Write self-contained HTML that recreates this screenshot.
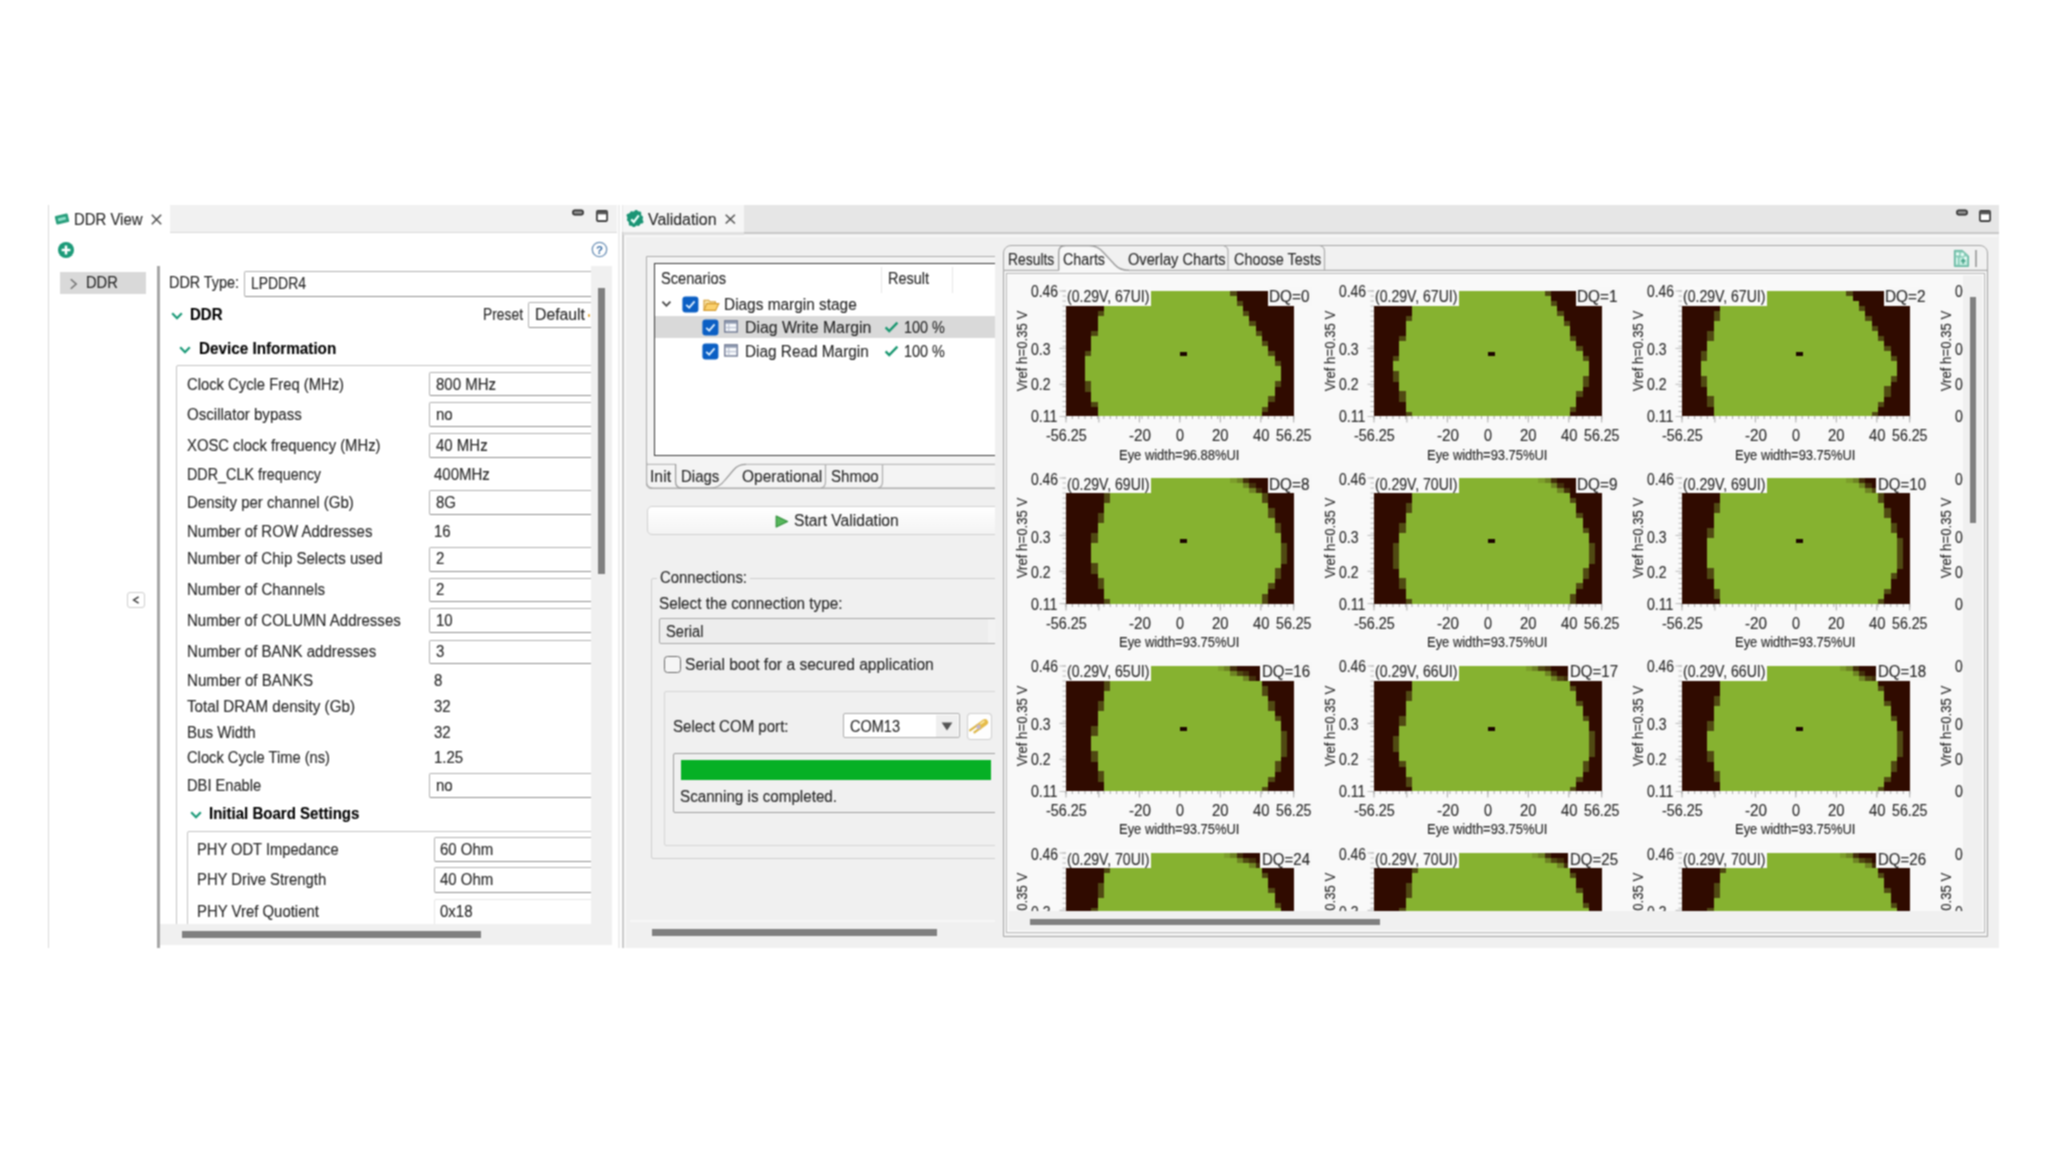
<!DOCTYPE html>
<html lang="en"><head><meta charset="utf-8"><title>DDR Validation</title><style>
html,body{margin:0;padding:0;background:#fff}
body{width:2048px;height:1153px;position:relative;overflow:hidden;font-family:"Liberation Sans",sans-serif;color:#262626}
div,span.t,svg{position:absolute;box-sizing:border-box}
#w{left:0;top:0;width:2048px;height:1153px;background:#fff;filter:url(#soft)}
span.t{white-space:pre;display:block;transform-origin:0 0;-webkit-text-stroke:0.12px currentColor}
.clip{overflow:hidden}
.in{background:#fff;border:1px solid #b0b0b0;border-bottom-color:#909090;border-radius:2px}
</style></head>
<body>
<svg width="0" height="0" style="position:absolute"><filter id="soft" x="0" y="0" width="100%" height="100%" color-interpolation-filters="sRGB"><feConvolveMatrix order="3" kernelMatrix="0.0625 0.125 0.0625 0.125 0.25 0.125 0.0625 0.125 0.0625" edgeMode="duplicate" preserveAlpha="true"/></filter></svg>
<div id="w">
<div style="left:48px;top:205px;width:570px;height:742.5px;background:#fff;border-left:1px solid #d9d9d9"></div>
<div style="left:49px;top:205px;width:568px;height:28px;background:#f1f1f1;border-bottom:1px solid #dadada"></div>
<div style="left:49px;top:205px;width:120.5px;height:29px;background:#fff"></div>
<svg style="left:53.5px;top:211px;" width="16" height="16" viewBox="0 0 16 16"><g transform="rotate(-13 8 8)"><rect x="1.4" y="3.6" width="13.2" height="8.8" rx="1.2" fill="#2a9f7d"/><rect x="4" y="6.4" width="8" height="3" rx="0.6" fill="#8fe0cb"/></g></svg>
<span class="t" style="left:74.00px;top:210.36px;font-size:16.00px;line-height:19px;transform:scaleX(0.9319);">DDR View</span>
<svg style="left:151px;top:214px;" width="11" height="11" viewBox="0 0 11 11"><path d="M0.8 0.8 L10.2 10.2 M10.2 0.8 L0.8 10.2" stroke="#4c4c4c" stroke-width="1.45" fill="none"/></svg>
<svg style="left:572px;top:208.5px;" width="12" height="8" viewBox="0 0 12 8"><rect x="0.9" y="1.2" width="10.2" height="4.6" rx="2" fill="#8a8a8a" stroke="#2b2b2b" stroke-width="1.5"/></svg>
<svg style="left:595.5px;top:209.5px;" width="12" height="12" viewBox="0 0 12 12"><rect x="0.9" y="0.9" width="10.2" height="10.2" rx="1" fill="#fff" stroke="#2b2b2b" stroke-width="1.6"/><rect x="0.9" y="0.9" width="10.2" height="3.4" fill="#555"/></svg>
<svg style="left:57px;top:240.5px;" width="18" height="18" viewBox="0 0 18 18"><circle cx="9" cy="9" r="8" fill="#1b9a78"/><path d="M9 4.6 V13.4 M4.6 9 H13.4" stroke="#fff" stroke-width="2.6"/></svg>
<svg style="left:591px;top:241px" width="17" height="17" viewBox="0 0 17 17"><circle cx="8.5" cy="8.5" r="7.2" fill="#fff" stroke="#6f93b8" stroke-width="1.3"/><text x="8.5" y="12.6" text-anchor="middle" font-family="Liberation Sans, sans-serif" font-weight="bold" font-size="11.5" fill="#3c6fa6">?</text></svg>
<div style="left:60px;top:271.5px;width:86px;height:22.5px;background:#d9d9d9"></div>
<svg style="left:69px;top:277.5px;" width="9" height="12" viewBox="0 0 9 12"><path d="M1.8 1.2 L7.2 6 L1.8 10.8" stroke="#707070" stroke-width="1.5" fill="none"/></svg>
<span class="t" style="left:85.75px;top:273.46px;font-size:16.00px;line-height:19px;transform:scaleX(0.9159);">DDR</span>
<div style="left:127px;top:591.5px;width:17.5px;height:16.5px;background:#fff;border:1px solid #cecece;border-radius:3px"></div>
<svg style="left:131px;top:595px;" width="10" height="10" viewBox="0 0 10 10"><path d="M7.6 1.8 L2.6 5 L7.6 8.2" stroke="#333" stroke-width="1.4" fill="none"/></svg>
<div style="left:156.5px;top:266px;width:3px;height:681.5px;background:#a6a6a6"></div>
<div style="left:590.5px;top:266px;width:21.5px;height:679px;background:#f0f0f0"></div>
<div style="left:159.5px;top:924px;width:452.5px;height:21px;background:#f0f0f0"></div>
<div style="left:598px;top:288px;width:6.5px;height:286px;background:#808080"></div>
<div style="left:181.5px;top:931px;width:299.5px;height:6.5px;background:#808080"></div>
<div class="clip" style="left:160px;top:266px;width:430.5px;height:658px">
<span class="t" style="left:8.75px;top:6.96px;font-size:16.00px;line-height:19px;transform:scaleX(0.8980);">DDR Type:</span>
<div class="in" style="left:83.75px;top:4.5px;width:400px;height:26.25px;"></div>
<span class="t" style="left:90.75px;top:7.96px;font-size:16.00px;line-height:19px;transform:scaleX(0.8711);">LPDDR4</span>
<svg style="left:11px;top:45.5px;" width="12" height="8" viewBox="0 0 12 8"><path d="M1.2 1.2 L6 6.2 L10.8 1.2" stroke="#1b9a78" stroke-width="2.2" fill="none"/></svg>
<span class="t" style="left:30.00px;top:38.96px;font-size:16.00px;line-height:19px;transform:scaleX(0.9375);font-weight:bold;color:#000;">DDR</span>
<span class="t" style="left:322.50px;top:38.96px;font-size:16.00px;line-height:19px;transform:scaleX(0.8650);">Preset</span>
<div class="in" style="left:367.5px;top:36.25px;width:120px;height:25.5px;"></div>
<span class="t" style="left:375.00px;top:39.21px;font-size:16.00px;line-height:19px;transform:scaleX(0.9863);">Default</span>
<div style="left:427.6px;top:47.5px;width:2.4px;height:3px;background:#e0a83a;border-radius:1px"></div>
<svg style="left:19px;top:79.5px;" width="12" height="8" viewBox="0 0 12 8"><path d="M1.2 1.2 L6 6.2 L10.8 1.2" stroke="#1b9a78" stroke-width="2.2" fill="none"/></svg>
<span class="t" style="left:38.75px;top:72.96px;font-size:16.00px;line-height:19px;transform:scaleX(0.9529);font-weight:bold;color:#000;">Device Information</span>
<div style="left:16px;top:98.5px;width:480px;height:700px;border:1px solid #c3c3c3;border-radius:2px"></div>
<span class="t" style="left:27.00px;top:108.71px;font-size:16.00px;line-height:19px;transform:scaleX(0.9247);">Clock Cycle Freq (MHz)</span>
<div class="in" style="left:268.75px;top:105.75px;width:300px;height:24.25px;"></div>
<span class="t" style="left:275.75px;top:108.71px;font-size:16.00px;line-height:19px;transform:scaleX(0.9370);">800 MHz</span>
<span class="t" style="left:27.00px;top:139.46px;font-size:16.00px;line-height:19px;transform:scaleX(0.9419);">Oscillator bypass</span>
<div class="in" style="left:268.75px;top:136.25px;width:300px;height:25px;"></div>
<span class="t" style="left:275.75px;top:139.46px;font-size:16.00px;line-height:19px;transform:scaleX(0.9370);">no</span>
<span class="t" style="left:27.00px;top:170.46px;font-size:16.00px;line-height:19px;transform:scaleX(0.9261);">XOSC clock frequency (MHz)</span>
<div class="in" style="left:268.75px;top:167px;width:300px;height:25px;"></div>
<span class="t" style="left:275.75px;top:170.46px;font-size:16.00px;line-height:19px;transform:scaleX(0.9370);">40 MHz</span>
<span class="t" style="left:27.00px;top:198.71px;font-size:16.00px;line-height:19px;transform:scaleX(0.8969);">DDR_CLK frequency</span>
<span class="t" style="left:274.00px;top:198.71px;font-size:16.00px;line-height:19px;transform:scaleX(0.9370);">400MHz</span>
<span class="t" style="left:27.00px;top:227.21px;font-size:16.00px;line-height:19px;transform:scaleX(0.9375);">Density per channel (Gb)</span>
<div class="in" style="left:268.75px;top:223.5px;width:300px;height:25px;"></div>
<span class="t" style="left:275.75px;top:227.21px;font-size:16.00px;line-height:19px;transform:scaleX(0.9370);">8G</span>
<span class="t" style="left:27.00px;top:255.96px;font-size:16.00px;line-height:19px;transform:scaleX(0.9397);">Number of ROW Addresses</span>
<span class="t" style="left:274.00px;top:255.96px;font-size:16.00px;line-height:19px;transform:scaleX(0.9370);">16</span>
<span class="t" style="left:27.00px;top:283.46px;font-size:16.00px;line-height:19px;transform:scaleX(0.9394);">Number of Chip Selects used</span>
<div class="in" style="left:268.75px;top:280.5px;width:300px;height:25px;"></div>
<span class="t" style="left:275.75px;top:283.46px;font-size:16.00px;line-height:19px;transform:scaleX(0.9370);">2</span>
<span class="t" style="left:27.00px;top:314.21px;font-size:16.00px;line-height:19px;transform:scaleX(0.9404);">Number of Channels</span>
<div class="in" style="left:268.75px;top:311.75px;width:300px;height:24.5px;"></div>
<span class="t" style="left:275.75px;top:314.21px;font-size:16.00px;line-height:19px;transform:scaleX(0.9370);">2</span>
<span class="t" style="left:27.00px;top:345.46px;font-size:16.00px;line-height:19px;transform:scaleX(0.9390);">Number of COLUMN Addresses</span>
<div class="in" style="left:268.75px;top:342.25px;width:300px;height:25px;"></div>
<span class="t" style="left:275.75px;top:345.46px;font-size:16.00px;line-height:19px;transform:scaleX(0.9370);">10</span>
<span class="t" style="left:27.00px;top:375.96px;font-size:16.00px;line-height:19px;transform:scaleX(0.9416);">Number of BANK addresses</span>
<div class="in" style="left:268.75px;top:373.5px;width:300px;height:24.5px;"></div>
<span class="t" style="left:275.75px;top:375.96px;font-size:16.00px;line-height:19px;transform:scaleX(0.9370);">3</span>
<span class="t" style="left:27.00px;top:404.71px;font-size:16.00px;line-height:19px;transform:scaleX(0.9446);">Number of BANKS</span>
<span class="t" style="left:274.00px;top:404.71px;font-size:16.00px;line-height:19px;transform:scaleX(0.9370);">8</span>
<span class="t" style="left:27.00px;top:430.96px;font-size:16.00px;line-height:19px;transform:scaleX(0.9495);">Total DRAM density (Gb)</span>
<span class="t" style="left:274.00px;top:430.96px;font-size:16.00px;line-height:19px;transform:scaleX(0.9370);">32</span>
<span class="t" style="left:27.00px;top:456.71px;font-size:16.00px;line-height:19px;transform:scaleX(0.9429);">Bus Width</span>
<span class="t" style="left:274.00px;top:456.71px;font-size:16.00px;line-height:19px;transform:scaleX(0.9370);">32</span>
<span class="t" style="left:27.00px;top:482.21px;font-size:16.00px;line-height:19px;transform:scaleX(0.9191);">Clock Cycle Time (ns)</span>
<span class="t" style="left:274.00px;top:482.21px;font-size:16.00px;line-height:19px;transform:scaleX(0.9370);">1.25</span>
<span class="t" style="left:27.00px;top:509.76px;font-size:16.00px;line-height:19px;transform:scaleX(0.9167);">DBI Enable</span>
<div class="in" style="left:268.75px;top:506.8px;width:300px;height:25.1px;"></div>
<span class="t" style="left:275.75px;top:509.76px;font-size:16.00px;line-height:19px;transform:scaleX(0.9370);">no</span>
<svg style="left:29.5px;top:545px;" width="12" height="8" viewBox="0 0 12 8"><path d="M1.2 1.2 L6 6.2 L10.8 1.2" stroke="#1b9a78" stroke-width="2.2" fill="none"/></svg>
<span class="t" style="left:49.00px;top:538.46px;font-size:16.00px;line-height:19px;transform:scaleX(0.9399);font-weight:bold;color:#000;">Initial Board Settings</span>
<div style="left:26.5px;top:564.5px;width:480px;height:300px;border:1px solid #c3c3c3;border-radius:2px"></div>
<span class="t" style="left:37.30px;top:573.66px;font-size:16.00px;line-height:19px;transform:scaleX(0.9186);">PHY ODT Impedance</span>
<div class="in" style="left:273.5px;top:571px;width:300px;height:24.5px;"></div>
<span class="t" style="left:280.00px;top:573.66px;font-size:16.00px;line-height:19px;transform:scaleX(0.9370);">60 Ohm</span>
<span class="t" style="left:37.30px;top:604.46px;font-size:16.00px;line-height:19px;transform:scaleX(0.9273);">PHY Drive Strength</span>
<div class="in" style="left:273.5px;top:601.3px;width:300px;height:25.5px;"></div>
<span class="t" style="left:280.00px;top:604.46px;font-size:16.00px;line-height:19px;transform:scaleX(0.9370);">40 Ohm</span>
<span class="t" style="left:37.30px;top:635.96px;font-size:16.00px;line-height:19px;transform:scaleX(0.9324);">PHY Vref Quotient</span>
<div style="left:273.5px;top:632.7px;width:300px;height:31.3px;background:#fff;border:1px solid #e6e6e6;border-radius:2px"></div>
<span class="t" style="left:280.00px;top:635.96px;font-size:16.00px;line-height:19px;transform:scaleX(0.9370);">0x18</span>
</div>
<div style="left:618.2px;top:205px;width:1.6px;height:742.5px;background:#eeeeee"></div>
<div style="left:621.5px;top:205px;width:1377px;height:742.5px;background:#f0f0f0"></div>
<div style="left:621.5px;top:205px;width:1377px;height:28.5px;background:#e6e6e6"></div>
<div style="left:621.5px;top:232.2px;width:1377px;height:2.3px;background:#c9c9c9"></div>
<div style="left:625px;top:234.5px;width:1373px;height:2.2px;background:#f6f6f6"></div>
<div style="left:622px;top:234px;width:2.4px;height:713.5px;background:#c9c9c9"></div>
<div style="left:624.4px;top:236px;width:1.6px;height:711.5px;background:#f8f8f8"></div>
<div style="left:622.5px;top:205px;width:121px;height:27.4px;background:#f6f6f6"></div>
<div style="left:622.5px;top:232.2px;width:121px;height:2.4px;background:#e0e0e0"></div>
<svg style="left:626px;top:209.8px;" width="18" height="17.5" viewBox="0 0 18 17.5"><path d="M16.1 6.0 L16.9 6.6 L17.1 7.5 L16.9 8.3 L16.6 9.1 L16.7 10.0 L17.2 11.0 L17.5 12.0 L17.1 12.9 L16.1 13.4 L15.0 13.6 L14.3 14.1 L13.9 14.8 L13.4 15.6 L12.6 15.9 L11.6 15.7 L10.7 15.6 L10.0 15.8 L9.3 16.5 L8.4 17.2 L7.5 17.3 L6.6 16.8 L6.0 16.1 L5.2 15.8 L4.2 15.7 L3.3 15.4 L2.8 14.6 L2.8 13.5 L2.8 12.5 L2.5 11.7 L1.9 11.2 L1.1 10.6 L0.9 9.7 L1.1 8.9 L1.4 8.1 L1.3 7.2 L0.8 6.2 L0.5 5.2 L0.9 4.3 L1.9 3.8 L3.0 3.6 L3.7 3.1 L4.1 2.4 L4.6 1.6 L5.4 1.3 L6.4 1.5 L7.3 1.6 L8.0 1.4 L8.7 0.7 L9.6 -0.0 L10.5 -0.1 L11.4 0.4 L12.0 1.1 L12.8 1.4 L13.8 1.5 L14.7 1.8 L15.2 2.6 L15.2 3.7 L15.2 4.7 L15.5 5.5 Z" fill="#1b9575"/><path d="M5.2 9.4 L7.8 12 L12.8 5.4" stroke="#ecfffa" stroke-width="2.2" fill="none"/></svg>
<span class="t" style="left:647.50px;top:209.96px;font-size:16.00px;line-height:19px;transform:scaleX(0.9915);">Validation</span>
<svg style="left:725.3px;top:214px;" width="11" height="11" viewBox="0 0 11 11"><path d="M0.7 0.7 L9.9 9.5 M9.9 0.7 L0.7 9.5" stroke="#4c4c4c" stroke-width="1.45" fill="none"/></svg>
<svg style="left:1955.5px;top:208.5px;" width="12" height="8" viewBox="0 0 12 8"><rect x="0.9" y="1.2" width="10.2" height="4.6" rx="2" fill="#8a8a8a" stroke="#2b2b2b" stroke-width="1.5"/></svg>
<svg style="left:1979px;top:209.5px;" width="12" height="12" viewBox="0 0 12 12"><rect x="0.9" y="0.9" width="10.2" height="10.2" rx="1" fill="#fff" stroke="#2b2b2b" stroke-width="1.6"/><rect x="0.9" y="0.9" width="10.2" height="3.4" fill="#555"/></svg>
<div class="clip" style="left:626px;top:237px;width:369px;height:710px">
<div style="left:20px;top:18.6px;width:500px;height:233px;background:#f4f4f4;border:1px solid #acacac;border-radius:0 0 0 5px"></div>
<div style="left:27.5px;top:26.2px;width:500px;height:193.2px;background:#fff;border:1.6px solid #3a3a3a"></div>
<span class="t" style="left:35.00px;top:31.96px;font-size:16.00px;line-height:19px;transform:scaleX(0.9135);">Scenarios</span>
<span class="t" style="left:262.00px;top:31.96px;font-size:16.00px;line-height:19px;transform:scaleX(0.9040);">Result</span>
<div style="left:254.5px;top:30px;width:1.2px;height:26px;background:#e6e6e6"></div>
<div style="left:326px;top:30px;width:1.2px;height:26px;background:#e6e6e6"></div>
<svg style="left:35px;top:63px;" width="11" height="8" viewBox="0 0 11 8"><path d="M1.4 1.6 L5.4 5.8 L9.4 1.6" stroke="#444" stroke-width="1.8" fill="none"/></svg>
<svg style="left:55.5px;top:58.5px;" width="17" height="17" viewBox="0 0 17 17"><rect x="0.4" y="0.4" width="16" height="16" rx="3.2" fill="#0b5fc4"/><path d="M4.2 8.8 L7.2 11.6 L12.6 5.4" stroke="#d9ecff" stroke-width="1.8" fill="none"/></svg>
<svg style="left:77px;top:60.5px;" width="17" height="14" viewBox="0 0 17 14"><path d="M1 12.4 V2.2 H5.6 L7 3.8 H12.4 V5.6" fill="#f8e3a6" stroke="#d39a2e" stroke-width="1.1"/><path d="M1 12.4 L3.8 5.6 H15.8 L12.6 12.4 Z" fill="#fbd16d" stroke="#d39a2e" stroke-width="1.1"/></svg>
<span class="t" style="left:98.25px;top:57.71px;font-size:16.00px;line-height:19px;transform:scaleX(0.9630);">Diags margin stage</span>
<div style="left:29px;top:79px;width:400px;height:22.3px;background:#d9d9d9"></div>
<svg style="left:76px;top:82.25px;" width="17" height="17" viewBox="0 0 17 17"><rect x="0.4" y="0.4" width="16" height="16" rx="3.2" fill="#0b5fc4"/><path d="M4.2 8.8 L7.2 11.6 L12.6 5.4" stroke="#d9ecff" stroke-width="1.8" fill="none"/></svg>
<svg style="left:98.25px;top:83px;" width="14" height="13" viewBox="0 0 14 13"><rect x="0.8" y="0.8" width="12.4" height="11.2" fill="#f6f8fc" stroke="#66708a" stroke-width="1.3"/><rect x="1.2" y="1.2" width="11.6" height="2.4" fill="#8793ab"/><path d="M4.8 3.6 V11.6 M1.4 7.6 H12.6" stroke="#b4bccd" stroke-width="1"/></svg>
<span class="t" style="left:119.00px;top:80.96px;font-size:16.00px;line-height:19px;transform:scaleX(0.9883);">Diag Write Margin</span>
<svg style="left:258px;top:84px;" width="15" height="12" viewBox="0 0 15 12"><path d="M1.6 6.4 L5.2 10 L13.4 1.6" stroke="#17966f" stroke-width="2.3" fill="none"/></svg>
<span class="t" style="left:277.75px;top:80.96px;font-size:16.00px;line-height:19px;transform:scaleX(0.8982);">100 %</span>
<svg style="left:76px;top:106px;" width="17" height="17" viewBox="0 0 17 17"><rect x="0.4" y="0.4" width="16" height="16" rx="3.2" fill="#0b5fc4"/><path d="M4.2 8.8 L7.2 11.6 L12.6 5.4" stroke="#d9ecff" stroke-width="1.8" fill="none"/></svg>
<svg style="left:98.25px;top:106.8px;" width="14" height="13" viewBox="0 0 14 13"><rect x="0.8" y="0.8" width="12.4" height="11.2" fill="#f6f8fc" stroke="#66708a" stroke-width="1.3"/><rect x="1.2" y="1.2" width="11.6" height="2.4" fill="#8793ab"/><path d="M4.8 3.6 V11.6 M1.4 7.6 H12.6" stroke="#b4bccd" stroke-width="1"/></svg>
<span class="t" style="left:119.00px;top:104.71px;font-size:16.00px;line-height:19px;transform:scaleX(0.9596);">Diag Read Margin</span>
<svg style="left:258px;top:107.8px;" width="15" height="12" viewBox="0 0 15 12"><path d="M1.6 6.4 L5.2 10 L13.4 1.6" stroke="#17966f" stroke-width="2.3" fill="none"/></svg>
<span class="t" style="left:277.75px;top:104.71px;font-size:16.00px;line-height:19px;transform:scaleX(0.8982);">100 %</span>
<svg style="left:20px;top:225px;" width="360" height="28" viewBox="0 0 360 28"><path d="M0 2.4 H29.6 M100 2.4 H360" stroke="#bababa" stroke-width="1.2" fill="none"/>
<path d="M29.6 2 V20 Q29.6 26 36 26 H65 Q73 26 79 18 L87.5 8 Q92 2.4 100 2.4" stroke="#979797" stroke-width="1.2" fill="#f4f4f4"/>
<path d="M0.6 0 V20 Q0.6 26 7 26 H360" stroke="#acacac" stroke-width="1.2" fill="none"/>
<path d="M179.5 3 V20 Q179.5 25 175 26" stroke="#acacac" stroke-width="1.2" fill="none"/>
<path d="M236.5 3 V20 Q236.5 25 232 26" stroke="#acacac" stroke-width="1.2" fill="none"/></svg>
<span class="t" style="left:24.00px;top:230.46px;font-size:16.00px;line-height:19px;transform:scaleX(0.9839);">Init</span>
<span class="t" style="left:54.50px;top:230.46px;font-size:16.00px;line-height:19px;transform:scaleX(0.9350);">Diags</span>
<span class="t" style="left:115.75px;top:230.46px;font-size:16.00px;line-height:19px;transform:scaleX(0.9701);">Operational</span>
<span class="t" style="left:205.00px;top:230.46px;font-size:16.00px;line-height:19px;transform:scaleX(0.9419);">Shmoo</span>
<div style="left:21px;top:269px;width:420px;height:28.5px;background:linear-gradient(#fff,#f3f3f3);border:1px solid #d1d1d1;border-radius:5px"></div>
<svg style="left:149px;top:277.5px;" width="14" height="13" viewBox="0 0 14 13"><path d="M1.2 1 L12.6 6.5 L1.2 12 Z" fill="#58b85c" stroke="#2f8f3a" stroke-width="1.2" stroke-linejoin="round"/></svg>
<span class="t" style="left:168.00px;top:273.96px;font-size:16.00px;line-height:19px;transform:scaleX(0.9760);">Start Validation</span>
<div style="left:25px;top:340.5px;width:420px;height:281.2px;border:1px solid #cecece;border-radius:2px"></div>
<div style="left:31px;top:333px;width:93px;height:16px;background:#f0f0f0"></div>
<span class="t" style="left:34.00px;top:330.96px;font-size:16.00px;line-height:19px;transform:scaleX(0.9316);">Connections:</span>
<span class="t" style="left:33.00px;top:356.71px;font-size:16.00px;line-height:19px;transform:scaleX(0.9551);">Select the connection type:</span>
<div style="left:33px;top:381px;width:420px;height:25.75px;background:#ededed;border:1px solid #a8a8a8;border-radius:2px"></div>
<span class="t" style="left:39.50px;top:384.56px;font-size:16.00px;line-height:19px;transform:scaleX(0.9167);">Serial</span>
<div style="left:362px;top:382px;width:20px;height:23.75px;background:#f2f2f2"></div>
<div style="left:37.75px;top:419px;width:16.75px;height:17px;background:#f5f5f5;border:1.3px solid #6a6a6a;border-radius:3.5px"></div>
<span class="t" style="left:59.00px;top:417.96px;font-size:16.00px;line-height:19px;transform:scaleX(0.9744);">Serial boot for a secured application</span>
<div style="left:38.25px;top:453.5px;width:420px;height:155px;border:1px solid #d5d5d5;border-radius:2px"></div>
<span class="t" style="left:46.50px;top:480.46px;font-size:16.00px;line-height:19px;transform:scaleX(0.9413);">Select COM port:</span>
<div style="left:217px;top:476px;width:116.5px;height:25px;background:#fff;border:1px solid #acacac;border-radius:2px"></div>
<div style="left:310px;top:477.5px;width:21.5px;height:22px;background:#efefef"></div>
<span class="t" style="left:223.50px;top:479.71px;font-size:16.00px;line-height:19px;transform:scaleX(0.9070);">COM13</span>
<svg style="left:314.5px;top:485px;" width="12" height="9" viewBox="0 0 12 9"><path d="M0.6 0.6 H11.4 L6 8.6 Z" fill="#555"/></svg>
<div style="left:340.75px;top:475.7px;width:25.2px;height:27px;background:#fefefe;border:1px solid #cecece;border-bottom-color:#cfcfcf;border-radius:4px"></div>
<svg style="left:342.9px;top:479.9px;" width="20" height="19" viewBox="0 0 20 19"><g transform="rotate(-35.5 10 9.5)"><path d="M9 6.3 H17 Q20.4 6.3 20.4 9.5 Q20.4 12.7 17 12.7 H9 Z" fill="#e6bb48"/><path d="M-0.5 6.3 H10 V8.5 H-0.5 Z M2 10.5 H10 V12.7 H2 Z" fill="#dcb544"/><path d="M12.5 8.2 H17.6" stroke="#fbeeb0" stroke-width="1.5" fill="none"/><circle cx="9.4" cy="9.5" r="2.2" fill="#c2b6d0"/></g></svg>
<div style="left:46.5px;top:515.5px;width:420px;height:60.75px;border:1px solid #9e9e9e;border-radius:2px"></div>
<div style="left:54.5px;top:523px;width:310.75px;height:20px;background:#06b025"></div>
<span class="t" style="left:54.00px;top:550.46px;font-size:16.00px;line-height:19px;transform:scaleX(0.9490);">Scanning is completed.</span>
<div style="left:4px;top:683.4px;width:400px;height:1.6px;background:#f7f7f7"></div>
<div style="left:26px;top:692.25px;width:284.75px;height:6.25px;background:#808080"></div>
</div>
<div style="left:1002.6px;top:244.8px;width:985.7px;height:692px;background:#f1f1f1;border:1.6px solid #a5a5a5;border-radius:8px 8px 0 0"></div>
<svg style="left:1003px;top:245.3px;" width="984" height="28" viewBox="0 0 984 28"><path d="M0 25.3 H55.7 M125 25.3 H984" stroke="#b0b0b0" stroke-width="1.3" fill="none"/>
<path d="M55.7 26 V7.5 Q55.7 0.6 62.5 0.6 H86 Q95 0.6 101 8 L112 20 Q117 25.3 126 25.3 V28 H55.7 Z" fill="#f7f7f7"/>
<path d="M55.7 25.6 V7.5 Q55.7 0.6 62.5 0.6 H86 Q95 0.6 101 8 L112 20 Q117 25.3 126 25.3" stroke="#979797" stroke-width="1.3" fill="none"/>
<path d="M225 25 V6 Q225 2 221 1" stroke="#acacac" stroke-width="1.2" fill="none"/>
<path d="M321.5 25 V6 Q321.5 2 317.5 1" stroke="#acacac" stroke-width="1.2" fill="none"/></svg>
<span class="t" style="left:1007.50px;top:249.71px;font-size:16.00px;line-height:19px;transform:scaleX(0.8669);">Results</span>
<span class="t" style="left:1062.50px;top:249.71px;font-size:16.00px;line-height:19px;transform:scaleX(0.8912);">Charts</span>
<span class="t" style="left:1127.50px;top:249.71px;font-size:16.00px;line-height:19px;transform:scaleX(0.9138);">Overlay Charts</span>
<span class="t" style="left:1233.75px;top:249.71px;font-size:16.00px;line-height:19px;transform:scaleX(0.9027);">Choose Tests</span>
<svg style="left:1952.8px;top:248.6px;" width="17.5" height="19" viewBox="0 0 17.5 19"><path d="M1.4 1.4 H9.4 L15.6 7 V17.4 H1.4 Z" fill="#86cbb7" stroke="#63b59e" stroke-width="1"/><rect x="3" y="3.4" width="3.2" height="3.2" rx="1" fill="#e9fdf7"/><rect x="7.6" y="3.8" width="3.4" height="3.4" rx="1" fill="#e0faf3"/><rect x="3" y="8.2" width="1.8" height="7.6" rx="0.8" fill="#d6f4ec"/><rect x="6.4" y="8.6" width="7.6" height="7.4" rx="1" fill="#c3ecdf"/><rect x="11" y="7.4" width="3" height="3" rx="1" fill="#e6fbf5"/><path d="M10.2 15 V10.6 M8.2 12.6 L10.2 10.4 L12.2 12.6" stroke="#4fa88f" stroke-width="1.5" fill="none"/></svg>
<div style="left:1975.3px;top:249.5px;width:1.8px;height:17px;background:#a8a8a8"></div>
<div style="left:1005.9px;top:272.6px;width:979.6px;height:660.6px;background:#f0f0f0;border:1.3px solid #bababa;box-shadow:inset 0 0 0 1.3px #fdfdfd"></div>
<div style="left:1969.75px;top:297px;width:5.75px;height:226px;background:#808080"></div>
<div style="left:1030px;top:919.25px;width:350px;height:5.75px;background:#808080"></div>
<div class="clip" style="left:1008.5px;top:275.2px;width:954.2px;height:636px;background:#f9f9f9">
<svg style="left:57.75px;top:15.55px;" width="227.7" height="125.6" viewBox="0 0 227.7 125.6"><g shape-rendering="crispEdges"><rect width="227.7" height="125.6" fill="#300b00"/><rect x="44.27" y="0.00" width="120.17" height="5.32" fill="#86b230"/><rect x="37.95" y="0.00" width="6.52" height="5.32" fill="#504a12"/><rect x="164.25" y="0.00" width="6.52" height="5.32" fill="#504a12"/><rect x="37.95" y="5.02" width="132.82" height="5.32" fill="#86b230"/><rect x="37.95" y="10.05" width="132.82" height="5.32" fill="#86b230"/><rect x="170.57" y="10.05" width="6.52" height="5.32" fill="#504a12"/><rect x="37.95" y="15.07" width="139.15" height="5.32" fill="#86b230"/><rect x="37.95" y="20.10" width="139.15" height="5.32" fill="#86b230"/><rect x="31.62" y="20.10" width="6.52" height="5.32" fill="#504a12"/><rect x="176.90" y="20.10" width="6.52" height="5.32" fill="#504a12"/><rect x="31.62" y="25.12" width="151.80" height="5.32" fill="#86b230"/><rect x="31.62" y="30.14" width="151.80" height="5.32" fill="#86b230"/><rect x="183.22" y="30.14" width="6.52" height="5.32" fill="#504a12"/><rect x="31.62" y="35.17" width="158.12" height="5.32" fill="#86b230"/><rect x="31.62" y="40.19" width="158.12" height="5.32" fill="#86b230"/><rect x="25.30" y="40.19" width="6.52" height="5.32" fill="#504a12"/><rect x="189.55" y="40.19" width="6.52" height="5.32" fill="#504a12"/><rect x="25.30" y="45.22" width="170.77" height="5.32" fill="#86b230"/><rect x="25.30" y="50.24" width="170.77" height="5.32" fill="#86b230"/><rect x="195.88" y="50.24" width="6.52" height="5.32" fill="#504a12"/><rect x="25.30" y="55.26" width="177.10" height="5.32" fill="#86b230"/><rect x="25.30" y="60.29" width="177.10" height="5.32" fill="#86b230"/><rect x="18.97" y="60.29" width="6.52" height="5.32" fill="#504a12"/><rect x="202.20" y="60.29" width="6.52" height="5.32" fill="#504a12"/><rect x="18.97" y="65.31" width="189.75" height="5.32" fill="#86b230"/><rect x="18.97" y="70.34" width="189.75" height="5.32" fill="#86b230"/><rect x="208.52" y="70.34" width="6.52" height="5.32" fill="#504a12"/><rect x="18.97" y="75.36" width="196.07" height="15.37" fill="#86b230"/><rect x="25.30" y="90.43" width="183.42" height="5.32" fill="#86b230"/><rect x="18.97" y="90.43" width="6.52" height="5.32" fill="#504a12"/><rect x="208.52" y="90.43" width="6.52" height="5.32" fill="#504a12"/><rect x="25.30" y="95.46" width="183.42" height="5.32" fill="#86b230"/><rect x="18.97" y="95.46" width="6.52" height="5.32" fill="#504a12"/><rect x="25.30" y="100.48" width="183.42" height="5.32" fill="#86b230"/><rect x="25.30" y="105.50" width="177.10" height="5.32" fill="#86b230"/><rect x="202.20" y="105.50" width="6.52" height="5.32" fill="#504a12"/><rect x="31.62" y="110.53" width="170.77" height="5.32" fill="#86b230"/><rect x="25.30" y="110.53" width="6.52" height="5.32" fill="#504a12"/><rect x="31.62" y="115.55" width="164.45" height="5.32" fill="#86b230"/><rect x="195.88" y="115.55" width="6.52" height="5.32" fill="#504a12"/><rect x="31.62" y="120.58" width="164.45" height="5.32" fill="#86b230"/><rect x="113.55" y="60.89" width="7.52" height="4.02" fill="#1c0500"/></g></svg>
<svg style="left:49.75px;top:14.55px;" width="8" height="127.6" viewBox="0 0 8 127.6"><path d="M-3.5 0.00 H0 M-3.5 5.02 H0 M-3.5 10.05 H0 M-3.5 15.07 H0 M-3.5 20.10 H0 M-3.5 25.12 H0 M-3.5 30.14 H0 M-3.5 35.17 H0 M-3.5 40.19 H0 M-3.5 45.22 H0 M-3.5 50.24 H0 M-3.5 55.26 H0 M-3.5 60.29 H0 M-3.5 65.31 H0 M-3.5 70.34 H0 M-3.5 75.36 H0 M-3.5 80.38 H0 M-3.5 85.41 H0 M-3.5 90.43 H0 M-3.5 95.46 H0 M-3.5 100.48 H0 M-3.5 105.50 H0 M-3.5 110.53 H0 M-3.5 115.55 H0 M-3.5 120.58 H0 M-3.5 125.60 H0 M-6.5 0.00 H0 M-6.5 57.42 H0 M-6.5 93.30 H0 M-6.5 125.60 H0" transform="translate(8 1)" stroke="#bababa" stroke-width="1" fill="none"/></svg>
<span class="t" style="left:22.00px;top:6.10px;font-size:16.32px;line-height:20px;transform:scaleX(0.8500);">0.46</span>
<span class="t" style="left:22.00px;top:64.10px;font-size:16.32px;line-height:20px;transform:scaleX(0.8595);">0.3</span>
<span class="t" style="left:22.00px;top:99.10px;font-size:16.32px;line-height:20px;transform:scaleX(0.8595);">0.2</span>
<span class="t" style="left:22.00px;top:131.10px;font-size:16.32px;line-height:20px;transform:scaleX(0.8674);">0.11</span>
<span class="t" style="left:-31.19px;top:67.75px;width:89.88px;font-size:14.72px;line-height:16px;transform:rotate(-90deg) scaleX(0.8956);transform-origin:50% 50%">Vref h=0.35 V</span>
<svg style="left:56.75px;top:141.15px;" width="229.7" height="8" viewBox="0 0 229.7 8"><path d="M0.00 0 V3 M6.32 0 V3 M12.65 0 V3 M18.97 0 V3 M25.30 0 V3 M31.62 0 V3 M37.95 0 V3 M44.27 0 V3 M50.60 0 V3 M56.92 0 V3 M63.25 0 V3 M69.57 0 V3 M75.90 0 V3 M82.22 0 V3 M88.55 0 V3 M94.87 0 V3 M101.20 0 V3 M107.52 0 V3 M113.85 0 V3 M120.17 0 V3 M126.50 0 V3 M132.82 0 V3 M139.15 0 V3 M145.47 0 V3 M151.80 0 V3 M158.12 0 V3 M164.45 0 V3 M170.77 0 V3 M177.10 0 V3 M183.42 0 V3 M189.75 0 V3 M196.07 0 V3 M202.40 0 V3 M208.72 0 V3 M215.05 0 V3 M221.37 0 V3 M227.70 0 V3 M0.00 0 V6.5 M32.89 0 V6.5 M73.37 0 V6.5 M113.85 0 V6.5 M154.33 0 V6.5 M194.81 0 V6.5 M227.70 0 V6.5" transform="translate(1 0)" stroke="#a8a8a8" stroke-width="1" fill="none"/></svg>
<span class="t" style="left:37.38px;top:149.90px;font-size:16.32px;line-height:20px;transform:scaleX(0.8806);">-56.25</span>
<span class="t" style="left:120.12px;top:149.90px;font-size:16.32px;line-height:20px;transform:scaleX(0.9326);">-20</span>
<span class="t" style="left:167.60px;top:149.90px;font-size:16.32px;line-height:20px;transform:scaleX(0.8814);">0</span>
<span class="t" style="left:203.83px;top:149.90px;font-size:16.32px;line-height:20px;transform:scaleX(0.9089);">20</span>
<span class="t" style="left:244.31px;top:149.90px;font-size:16.32px;line-height:20px;transform:scaleX(0.9089);">40</span>
<span class="t" style="left:267.70px;top:149.90px;font-size:16.32px;line-height:20px;transform:scaleX(0.8692);">56.25</span>
<span class="t" style="left:110.50px;top:171.35px;font-size:13.87px;line-height:17px;transform:scaleX(0.9333);">Eye width=96.88%UI</span>
<div style="left:57.25px;top:11.55px;width:85.5px;height:19px;background:#fafafa"></div>
<span class="t" style="left:58.75px;top:11.20px;font-size:16.32px;line-height:20px;transform:scaleX(0.8633);">(0.29V, 67UI)</span>
<div style="left:259.25px;top:11.55px;width:44px;height:19px;background:#f8f8f8"></div>
<span class="t" style="left:260.75px;top:11.20px;font-size:16.32px;line-height:20px;transform:scaleX(0.9400);">DQ=0</span>
<svg style="left:365.75px;top:15.55px;" width="227.7" height="125.6" viewBox="0 0 227.7 125.6"><g shape-rendering="crispEdges"><rect width="227.7" height="125.6" fill="#300b00"/><rect x="44.27" y="0.00" width="126.50" height="5.32" fill="#86b230"/><rect x="170.57" y="0.00" width="6.52" height="5.32" fill="#504a12"/><rect x="44.27" y="5.02" width="132.82" height="5.32" fill="#86b230"/><rect x="37.95" y="5.02" width="6.52" height="5.32" fill="#504a12"/><rect x="37.95" y="10.05" width="139.15" height="5.32" fill="#86b230"/><rect x="176.90" y="10.05" width="6.52" height="5.32" fill="#504a12"/><rect x="37.95" y="15.07" width="145.47" height="5.32" fill="#86b230"/><rect x="37.95" y="20.10" width="145.47" height="5.32" fill="#86b230"/><rect x="183.22" y="20.10" width="6.52" height="5.32" fill="#504a12"/><rect x="37.95" y="25.12" width="151.80" height="5.32" fill="#86b230"/><rect x="31.62" y="25.12" width="6.52" height="5.32" fill="#504a12"/><rect x="31.62" y="30.14" width="158.12" height="5.32" fill="#86b230"/><rect x="189.55" y="30.14" width="6.52" height="5.32" fill="#504a12"/><rect x="31.62" y="35.17" width="164.45" height="10.35" fill="#86b230"/><rect x="31.62" y="45.22" width="164.45" height="5.32" fill="#86b230"/><rect x="25.30" y="45.22" width="6.52" height="5.32" fill="#504a12"/><rect x="195.88" y="45.22" width="6.52" height="5.32" fill="#504a12"/><rect x="25.30" y="50.24" width="177.10" height="5.32" fill="#86b230"/><rect x="25.30" y="55.26" width="177.10" height="5.32" fill="#86b230"/><rect x="202.20" y="55.26" width="6.52" height="5.32" fill="#504a12"/><rect x="25.30" y="60.29" width="183.42" height="5.32" fill="#86b230"/><rect x="25.30" y="65.31" width="183.42" height="5.32" fill="#86b230"/><rect x="18.97" y="65.31" width="6.52" height="5.32" fill="#504a12"/><rect x="208.52" y="65.31" width="6.52" height="5.32" fill="#504a12"/><rect x="18.97" y="70.34" width="196.07" height="10.35" fill="#86b230"/><rect x="25.30" y="80.38" width="189.75" height="5.32" fill="#86b230"/><rect x="18.97" y="80.38" width="6.52" height="5.32" fill="#504a12"/><rect x="25.30" y="85.41" width="183.42" height="5.32" fill="#86b230"/><rect x="18.97" y="85.41" width="6.52" height="5.32" fill="#504a12"/><rect x="208.52" y="85.41" width="6.52" height="5.32" fill="#504a12"/><rect x="25.30" y="90.43" width="183.42" height="5.32" fill="#86b230"/><rect x="208.52" y="90.43" width="6.52" height="5.32" fill="#504a12"/><rect x="25.30" y="95.46" width="183.42" height="5.32" fill="#86b230"/><rect x="31.62" y="100.48" width="170.77" height="5.32" fill="#86b230"/><rect x="25.30" y="100.48" width="6.52" height="5.32" fill="#504a12"/><rect x="202.20" y="100.48" width="6.52" height="5.32" fill="#504a12"/><rect x="31.62" y="105.50" width="170.77" height="5.32" fill="#86b230"/><rect x="25.30" y="105.50" width="6.52" height="5.32" fill="#504a12"/><rect x="31.62" y="110.53" width="170.77" height="5.32" fill="#86b230"/><rect x="31.62" y="115.55" width="164.45" height="5.32" fill="#86b230"/><rect x="195.88" y="115.55" width="6.52" height="5.32" fill="#504a12"/><rect x="37.95" y="120.58" width="158.12" height="5.32" fill="#86b230"/><rect x="31.62" y="120.58" width="6.52" height="5.32" fill="#504a12"/><rect x="113.55" y="60.89" width="7.52" height="4.02" fill="#1c0500"/></g></svg>
<svg style="left:357.75px;top:14.55px;" width="8" height="127.6" viewBox="0 0 8 127.6"><path d="M-3.5 0.00 H0 M-3.5 5.02 H0 M-3.5 10.05 H0 M-3.5 15.07 H0 M-3.5 20.10 H0 M-3.5 25.12 H0 M-3.5 30.14 H0 M-3.5 35.17 H0 M-3.5 40.19 H0 M-3.5 45.22 H0 M-3.5 50.24 H0 M-3.5 55.26 H0 M-3.5 60.29 H0 M-3.5 65.31 H0 M-3.5 70.34 H0 M-3.5 75.36 H0 M-3.5 80.38 H0 M-3.5 85.41 H0 M-3.5 90.43 H0 M-3.5 95.46 H0 M-3.5 100.48 H0 M-3.5 105.50 H0 M-3.5 110.53 H0 M-3.5 115.55 H0 M-3.5 120.58 H0 M-3.5 125.60 H0 M-6.5 0.00 H0 M-6.5 57.42 H0 M-6.5 93.30 H0 M-6.5 125.60 H0" transform="translate(8 1)" stroke="#bababa" stroke-width="1" fill="none"/></svg>
<span class="t" style="left:330.00px;top:6.10px;font-size:16.32px;line-height:20px;transform:scaleX(0.8500);">0.46</span>
<span class="t" style="left:330.00px;top:64.10px;font-size:16.32px;line-height:20px;transform:scaleX(0.8595);">0.3</span>
<span class="t" style="left:330.00px;top:99.10px;font-size:16.32px;line-height:20px;transform:scaleX(0.8595);">0.2</span>
<span class="t" style="left:330.00px;top:131.10px;font-size:16.32px;line-height:20px;transform:scaleX(0.8674);">0.11</span>
<span class="t" style="left:276.81px;top:67.75px;width:89.88px;font-size:14.72px;line-height:16px;transform:rotate(-90deg) scaleX(0.8956);transform-origin:50% 50%">Vref h=0.35 V</span>
<svg style="left:364.75px;top:141.15px;" width="229.7" height="8" viewBox="0 0 229.7 8"><path d="M0.00 0 V3 M6.32 0 V3 M12.65 0 V3 M18.97 0 V3 M25.30 0 V3 M31.62 0 V3 M37.95 0 V3 M44.27 0 V3 M50.60 0 V3 M56.92 0 V3 M63.25 0 V3 M69.57 0 V3 M75.90 0 V3 M82.22 0 V3 M88.55 0 V3 M94.87 0 V3 M101.20 0 V3 M107.52 0 V3 M113.85 0 V3 M120.17 0 V3 M126.50 0 V3 M132.82 0 V3 M139.15 0 V3 M145.47 0 V3 M151.80 0 V3 M158.12 0 V3 M164.45 0 V3 M170.77 0 V3 M177.10 0 V3 M183.42 0 V3 M189.75 0 V3 M196.07 0 V3 M202.40 0 V3 M208.72 0 V3 M215.05 0 V3 M221.37 0 V3 M227.70 0 V3 M0.00 0 V6.5 M32.89 0 V6.5 M73.37 0 V6.5 M113.85 0 V6.5 M154.33 0 V6.5 M194.81 0 V6.5 M227.70 0 V6.5" transform="translate(1 0)" stroke="#a8a8a8" stroke-width="1" fill="none"/></svg>
<span class="t" style="left:345.38px;top:149.90px;font-size:16.32px;line-height:20px;transform:scaleX(0.8806);">-56.25</span>
<span class="t" style="left:428.12px;top:149.90px;font-size:16.32px;line-height:20px;transform:scaleX(0.9326);">-20</span>
<span class="t" style="left:475.60px;top:149.90px;font-size:16.32px;line-height:20px;transform:scaleX(0.8814);">0</span>
<span class="t" style="left:511.83px;top:149.90px;font-size:16.32px;line-height:20px;transform:scaleX(0.9089);">20</span>
<span class="t" style="left:552.31px;top:149.90px;font-size:16.32px;line-height:20px;transform:scaleX(0.9089);">40</span>
<span class="t" style="left:575.70px;top:149.90px;font-size:16.32px;line-height:20px;transform:scaleX(0.8692);">56.25</span>
<span class="t" style="left:418.50px;top:171.35px;font-size:13.87px;line-height:17px;transform:scaleX(0.9333);">Eye width=93.75%UI</span>
<div style="left:365.25px;top:11.55px;width:85.5px;height:19px;background:#fafafa"></div>
<span class="t" style="left:366.75px;top:11.20px;font-size:16.32px;line-height:20px;transform:scaleX(0.8633);">(0.29V, 67UI)</span>
<div style="left:567.25px;top:11.55px;width:44px;height:19px;background:#f8f8f8"></div>
<span class="t" style="left:568.75px;top:11.20px;font-size:16.32px;line-height:20px;transform:scaleX(0.9400);">DQ=1</span>
<svg style="left:673.75px;top:15.55px;" width="227.7" height="125.6" viewBox="0 0 227.7 125.6"><g shape-rendering="crispEdges"><rect width="227.7" height="125.6" fill="#300b00"/><rect x="44.27" y="0.00" width="120.17" height="5.32" fill="#86b230"/><rect x="164.25" y="0.00" width="6.52" height="5.32" fill="#504a12"/><rect x="44.27" y="5.02" width="126.50" height="5.32" fill="#86b230"/><rect x="37.95" y="5.02" width="6.52" height="5.32" fill="#504a12"/><rect x="37.95" y="10.05" width="139.15" height="5.32" fill="#86b230"/><rect x="37.95" y="15.07" width="139.15" height="5.32" fill="#86b230"/><rect x="176.90" y="15.07" width="6.52" height="5.32" fill="#504a12"/><rect x="37.95" y="20.10" width="145.47" height="5.32" fill="#86b230"/><rect x="31.62" y="20.10" width="6.52" height="5.32" fill="#504a12"/><rect x="37.95" y="25.12" width="145.47" height="5.32" fill="#86b230"/><rect x="31.62" y="25.12" width="6.52" height="5.32" fill="#504a12"/><rect x="183.22" y="25.12" width="6.52" height="5.32" fill="#504a12"/><rect x="31.62" y="30.14" width="158.12" height="5.32" fill="#86b230"/><rect x="31.62" y="35.17" width="158.12" height="5.32" fill="#86b230"/><rect x="189.55" y="35.17" width="6.52" height="5.32" fill="#504a12"/><rect x="31.62" y="40.19" width="164.45" height="5.32" fill="#86b230"/><rect x="25.30" y="40.19" width="6.52" height="5.32" fill="#504a12"/><rect x="31.62" y="45.22" width="164.45" height="5.32" fill="#86b230"/><rect x="25.30" y="45.22" width="6.52" height="5.32" fill="#504a12"/><rect x="195.88" y="45.22" width="6.52" height="5.32" fill="#504a12"/><rect x="25.30" y="50.24" width="177.10" height="5.32" fill="#86b230"/><rect x="25.30" y="55.26" width="177.10" height="5.32" fill="#86b230"/><rect x="202.20" y="55.26" width="6.52" height="5.32" fill="#504a12"/><rect x="25.30" y="60.29" width="183.42" height="5.32" fill="#86b230"/><rect x="18.97" y="60.29" width="6.52" height="5.32" fill="#504a12"/><rect x="25.30" y="65.31" width="183.42" height="5.32" fill="#86b230"/><rect x="18.97" y="65.31" width="6.52" height="5.32" fill="#504a12"/><rect x="208.52" y="65.31" width="6.52" height="5.32" fill="#504a12"/><rect x="18.97" y="70.34" width="196.07" height="15.37" fill="#86b230"/><rect x="25.30" y="85.41" width="183.42" height="5.32" fill="#86b230"/><rect x="18.97" y="85.41" width="6.52" height="5.32" fill="#504a12"/><rect x="208.52" y="85.41" width="6.52" height="5.32" fill="#504a12"/><rect x="25.30" y="90.43" width="183.42" height="5.32" fill="#86b230"/><rect x="18.97" y="90.43" width="6.52" height="5.32" fill="#504a12"/><rect x="25.30" y="95.46" width="177.10" height="10.35" fill="#86b230"/><rect x="202.20" y="95.46" width="6.52" height="10.35" fill="#504a12"/><rect x="31.62" y="105.50" width="170.77" height="5.32" fill="#86b230"/><rect x="25.30" y="105.50" width="6.52" height="5.32" fill="#504a12"/><rect x="31.62" y="110.53" width="164.45" height="5.32" fill="#86b230"/><rect x="25.30" y="110.53" width="6.52" height="5.32" fill="#504a12"/><rect x="195.88" y="110.53" width="6.52" height="5.32" fill="#504a12"/><rect x="31.62" y="115.55" width="164.45" height="5.32" fill="#86b230"/><rect x="31.62" y="120.58" width="158.12" height="5.32" fill="#86b230"/><rect x="189.55" y="120.58" width="6.52" height="5.32" fill="#504a12"/><rect x="113.55" y="60.89" width="7.52" height="4.02" fill="#1c0500"/></g></svg>
<svg style="left:665.75px;top:14.55px;" width="8" height="127.6" viewBox="0 0 8 127.6"><path d="M-3.5 0.00 H0 M-3.5 5.02 H0 M-3.5 10.05 H0 M-3.5 15.07 H0 M-3.5 20.10 H0 M-3.5 25.12 H0 M-3.5 30.14 H0 M-3.5 35.17 H0 M-3.5 40.19 H0 M-3.5 45.22 H0 M-3.5 50.24 H0 M-3.5 55.26 H0 M-3.5 60.29 H0 M-3.5 65.31 H0 M-3.5 70.34 H0 M-3.5 75.36 H0 M-3.5 80.38 H0 M-3.5 85.41 H0 M-3.5 90.43 H0 M-3.5 95.46 H0 M-3.5 100.48 H0 M-3.5 105.50 H0 M-3.5 110.53 H0 M-3.5 115.55 H0 M-3.5 120.58 H0 M-3.5 125.60 H0 M-6.5 0.00 H0 M-6.5 57.42 H0 M-6.5 93.30 H0 M-6.5 125.60 H0" transform="translate(8 1)" stroke="#bababa" stroke-width="1" fill="none"/></svg>
<span class="t" style="left:638.00px;top:6.10px;font-size:16.32px;line-height:20px;transform:scaleX(0.8500);">0.46</span>
<span class="t" style="left:638.00px;top:64.10px;font-size:16.32px;line-height:20px;transform:scaleX(0.8595);">0.3</span>
<span class="t" style="left:638.00px;top:99.10px;font-size:16.32px;line-height:20px;transform:scaleX(0.8595);">0.2</span>
<span class="t" style="left:638.00px;top:131.10px;font-size:16.32px;line-height:20px;transform:scaleX(0.8674);">0.11</span>
<span class="t" style="left:584.81px;top:67.75px;width:89.88px;font-size:14.72px;line-height:16px;transform:rotate(-90deg) scaleX(0.8956);transform-origin:50% 50%">Vref h=0.35 V</span>
<svg style="left:672.75px;top:141.15px;" width="229.7" height="8" viewBox="0 0 229.7 8"><path d="M0.00 0 V3 M6.32 0 V3 M12.65 0 V3 M18.97 0 V3 M25.30 0 V3 M31.62 0 V3 M37.95 0 V3 M44.27 0 V3 M50.60 0 V3 M56.92 0 V3 M63.25 0 V3 M69.57 0 V3 M75.90 0 V3 M82.22 0 V3 M88.55 0 V3 M94.87 0 V3 M101.20 0 V3 M107.52 0 V3 M113.85 0 V3 M120.17 0 V3 M126.50 0 V3 M132.82 0 V3 M139.15 0 V3 M145.47 0 V3 M151.80 0 V3 M158.12 0 V3 M164.45 0 V3 M170.77 0 V3 M177.10 0 V3 M183.42 0 V3 M189.75 0 V3 M196.07 0 V3 M202.40 0 V3 M208.72 0 V3 M215.05 0 V3 M221.37 0 V3 M227.70 0 V3 M0.00 0 V6.5 M32.89 0 V6.5 M73.37 0 V6.5 M113.85 0 V6.5 M154.33 0 V6.5 M194.81 0 V6.5 M227.70 0 V6.5" transform="translate(1 0)" stroke="#a8a8a8" stroke-width="1" fill="none"/></svg>
<span class="t" style="left:653.38px;top:149.90px;font-size:16.32px;line-height:20px;transform:scaleX(0.8806);">-56.25</span>
<span class="t" style="left:736.12px;top:149.90px;font-size:16.32px;line-height:20px;transform:scaleX(0.9326);">-20</span>
<span class="t" style="left:783.60px;top:149.90px;font-size:16.32px;line-height:20px;transform:scaleX(0.8814);">0</span>
<span class="t" style="left:819.83px;top:149.90px;font-size:16.32px;line-height:20px;transform:scaleX(0.9089);">20</span>
<span class="t" style="left:860.31px;top:149.90px;font-size:16.32px;line-height:20px;transform:scaleX(0.9089);">40</span>
<span class="t" style="left:883.70px;top:149.90px;font-size:16.32px;line-height:20px;transform:scaleX(0.8692);">56.25</span>
<span class="t" style="left:726.50px;top:171.35px;font-size:13.87px;line-height:17px;transform:scaleX(0.9333);">Eye width=93.75%UI</span>
<div style="left:673.25px;top:11.55px;width:85.5px;height:19px;background:#fafafa"></div>
<span class="t" style="left:674.75px;top:11.20px;font-size:16.32px;line-height:20px;transform:scaleX(0.8633);">(0.29V, 67UI)</span>
<div style="left:875.25px;top:11.55px;width:44px;height:19px;background:#f8f8f8"></div>
<span class="t" style="left:876.75px;top:11.20px;font-size:16.32px;line-height:20px;transform:scaleX(0.9400);">DQ=2</span>
<svg style="left:57.75px;top:203px;" width="227.7" height="125.6" viewBox="0 0 227.7 125.6"><g shape-rendering="crispEdges"><rect width="227.7" height="125.6" fill="#300b00"/><rect x="44.27" y="0.00" width="132.82" height="5.32" fill="#86b230"/><rect x="170.77" y="0.00" width="6.32" height="5.32" fill="#6e8323"/><rect x="177.10" y="0.00" width="6.32" height="5.32" fill="#43300b"/><rect x="164.45" y="0.00" width="6.32" height="5.32" fill="#7c9e2a"/><rect x="44.27" y="5.02" width="139.15" height="5.32" fill="#86b230"/><rect x="177.10" y="5.02" width="6.32" height="5.32" fill="#6e8323"/><rect x="183.42" y="5.02" width="6.32" height="5.32" fill="#43300b"/><rect x="44.27" y="10.05" width="145.47" height="5.32" fill="#86b230"/><rect x="183.42" y="10.05" width="6.32" height="5.32" fill="#6e8323"/><rect x="189.75" y="10.05" width="6.32" height="5.32" fill="#43300b"/><rect x="44.27" y="15.07" width="151.80" height="10.35" fill="#86b230"/><rect x="37.95" y="15.07" width="6.52" height="10.35" fill="#504a12"/><rect x="195.88" y="15.07" width="6.52" height="10.35" fill="#504a12"/><rect x="37.95" y="25.12" width="164.45" height="5.32" fill="#86b230"/><rect x="37.95" y="30.14" width="164.45" height="5.32" fill="#86b230"/><rect x="202.20" y="30.14" width="6.52" height="5.32" fill="#504a12"/><rect x="37.95" y="35.17" width="164.45" height="5.32" fill="#86b230"/><rect x="31.62" y="35.17" width="6.52" height="5.32" fill="#504a12"/><rect x="202.20" y="35.17" width="6.52" height="5.32" fill="#504a12"/><rect x="37.95" y="40.19" width="170.77" height="5.32" fill="#86b230"/><rect x="31.62" y="40.19" width="6.52" height="5.32" fill="#504a12"/><rect x="31.62" y="45.22" width="177.10" height="10.35" fill="#86b230"/><rect x="208.52" y="45.22" width="6.52" height="10.35" fill="#504a12"/><rect x="31.62" y="55.26" width="183.42" height="10.35" fill="#86b230"/><rect x="25.30" y="55.26" width="6.52" height="10.35" fill="#504a12"/><rect x="25.30" y="65.31" width="189.75" height="20.40" fill="#86b230"/><rect x="214.85" y="65.31" width="6.52" height="20.40" fill="#504a12"/><rect x="31.62" y="85.41" width="183.42" height="5.32" fill="#86b230"/><rect x="25.30" y="85.41" width="6.52" height="5.32" fill="#504a12"/><rect x="31.62" y="90.43" width="177.10" height="5.32" fill="#86b230"/><rect x="25.30" y="90.43" width="6.52" height="5.32" fill="#504a12"/><rect x="208.52" y="90.43" width="6.52" height="5.32" fill="#504a12"/><rect x="31.62" y="95.46" width="177.10" height="5.32" fill="#86b230"/><rect x="208.52" y="95.46" width="6.52" height="5.32" fill="#504a12"/><rect x="37.95" y="100.48" width="170.77" height="5.32" fill="#86b230"/><rect x="31.62" y="100.48" width="6.52" height="5.32" fill="#504a12"/><rect x="37.95" y="105.50" width="164.45" height="5.32" fill="#86b230"/><rect x="31.62" y="105.50" width="6.52" height="5.32" fill="#504a12"/><rect x="202.20" y="105.50" width="6.52" height="5.32" fill="#504a12"/><rect x="37.95" y="110.53" width="164.45" height="5.32" fill="#86b230"/><rect x="37.95" y="115.55" width="158.12" height="5.32" fill="#86b230"/><rect x="195.88" y="115.55" width="6.52" height="5.32" fill="#504a12"/><rect x="44.27" y="120.58" width="151.80" height="5.32" fill="#86b230"/><rect x="37.95" y="120.58" width="6.52" height="5.32" fill="#504a12"/><rect x="195.88" y="120.58" width="6.52" height="5.32" fill="#504a12"/><rect x="113.55" y="60.89" width="7.52" height="4.02" fill="#1c0500"/></g></svg>
<svg style="left:49.75px;top:202px;" width="8" height="127.6" viewBox="0 0 8 127.6"><path d="M-3.5 0.00 H0 M-3.5 5.02 H0 M-3.5 10.05 H0 M-3.5 15.07 H0 M-3.5 20.10 H0 M-3.5 25.12 H0 M-3.5 30.14 H0 M-3.5 35.17 H0 M-3.5 40.19 H0 M-3.5 45.22 H0 M-3.5 50.24 H0 M-3.5 55.26 H0 M-3.5 60.29 H0 M-3.5 65.31 H0 M-3.5 70.34 H0 M-3.5 75.36 H0 M-3.5 80.38 H0 M-3.5 85.41 H0 M-3.5 90.43 H0 M-3.5 95.46 H0 M-3.5 100.48 H0 M-3.5 105.50 H0 M-3.5 110.53 H0 M-3.5 115.55 H0 M-3.5 120.58 H0 M-3.5 125.60 H0 M-6.5 0.00 H0 M-6.5 57.42 H0 M-6.5 93.30 H0 M-6.5 125.60 H0" transform="translate(8 1)" stroke="#bababa" stroke-width="1" fill="none"/></svg>
<span class="t" style="left:22.00px;top:193.55px;font-size:16.32px;line-height:20px;transform:scaleX(0.8500);">0.46</span>
<span class="t" style="left:22.00px;top:251.55px;font-size:16.32px;line-height:20px;transform:scaleX(0.8595);">0.3</span>
<span class="t" style="left:22.00px;top:286.55px;font-size:16.32px;line-height:20px;transform:scaleX(0.8595);">0.2</span>
<span class="t" style="left:22.00px;top:318.55px;font-size:16.32px;line-height:20px;transform:scaleX(0.8674);">0.11</span>
<span class="t" style="left:-31.19px;top:255.20px;width:89.88px;font-size:14.72px;line-height:16px;transform:rotate(-90deg) scaleX(0.8956);transform-origin:50% 50%">Vref h=0.35 V</span>
<svg style="left:56.75px;top:328.6px;" width="229.7" height="8" viewBox="0 0 229.7 8"><path d="M0.00 0 V3 M6.32 0 V3 M12.65 0 V3 M18.97 0 V3 M25.30 0 V3 M31.62 0 V3 M37.95 0 V3 M44.27 0 V3 M50.60 0 V3 M56.92 0 V3 M63.25 0 V3 M69.57 0 V3 M75.90 0 V3 M82.22 0 V3 M88.55 0 V3 M94.87 0 V3 M101.20 0 V3 M107.52 0 V3 M113.85 0 V3 M120.17 0 V3 M126.50 0 V3 M132.82 0 V3 M139.15 0 V3 M145.47 0 V3 M151.80 0 V3 M158.12 0 V3 M164.45 0 V3 M170.77 0 V3 M177.10 0 V3 M183.42 0 V3 M189.75 0 V3 M196.07 0 V3 M202.40 0 V3 M208.72 0 V3 M215.05 0 V3 M221.37 0 V3 M227.70 0 V3 M0.00 0 V6.5 M32.89 0 V6.5 M73.37 0 V6.5 M113.85 0 V6.5 M154.33 0 V6.5 M194.81 0 V6.5 M227.70 0 V6.5" transform="translate(1 0)" stroke="#a8a8a8" stroke-width="1" fill="none"/></svg>
<span class="t" style="left:37.38px;top:337.35px;font-size:16.32px;line-height:20px;transform:scaleX(0.8806);">-56.25</span>
<span class="t" style="left:120.12px;top:337.35px;font-size:16.32px;line-height:20px;transform:scaleX(0.9326);">-20</span>
<span class="t" style="left:167.60px;top:337.35px;font-size:16.32px;line-height:20px;transform:scaleX(0.8814);">0</span>
<span class="t" style="left:203.83px;top:337.35px;font-size:16.32px;line-height:20px;transform:scaleX(0.9089);">20</span>
<span class="t" style="left:244.31px;top:337.35px;font-size:16.32px;line-height:20px;transform:scaleX(0.9089);">40</span>
<span class="t" style="left:267.70px;top:337.35px;font-size:16.32px;line-height:20px;transform:scaleX(0.8692);">56.25</span>
<span class="t" style="left:110.50px;top:358.80px;font-size:13.87px;line-height:17px;transform:scaleX(0.9333);">Eye width=93.75%UI</span>
<div style="left:57.25px;top:199px;width:85.5px;height:19px;background:#fafafa"></div>
<span class="t" style="left:58.75px;top:198.65px;font-size:16.32px;line-height:20px;transform:scaleX(0.8633);">(0.29V, 69UI)</span>
<div style="left:259.25px;top:199px;width:44px;height:19px;background:#f8f8f8"></div>
<span class="t" style="left:260.75px;top:198.65px;font-size:16.32px;line-height:20px;transform:scaleX(0.9400);">DQ=8</span>
<svg style="left:365.75px;top:203px;" width="227.7" height="125.6" viewBox="0 0 227.7 125.6"><g shape-rendering="crispEdges"><rect width="227.7" height="125.6" fill="#300b00"/><rect x="44.27" y="0.00" width="132.82" height="5.32" fill="#86b230"/><rect x="170.77" y="0.00" width="6.32" height="5.32" fill="#6e8323"/><rect x="177.10" y="0.00" width="6.32" height="5.32" fill="#43300b"/><rect x="164.45" y="0.00" width="6.32" height="5.32" fill="#7c9e2a"/><rect x="44.27" y="5.02" width="139.15" height="5.32" fill="#86b230"/><rect x="37.95" y="5.02" width="6.52" height="5.32" fill="#504a12"/><rect x="177.10" y="5.02" width="6.32" height="5.32" fill="#6e8323"/><rect x="183.42" y="5.02" width="6.32" height="5.32" fill="#43300b"/><rect x="44.27" y="10.05" width="145.47" height="5.32" fill="#86b230"/><rect x="37.95" y="10.05" width="6.52" height="5.32" fill="#504a12"/><rect x="183.42" y="10.05" width="6.32" height="5.32" fill="#6e8323"/><rect x="189.75" y="10.05" width="6.32" height="5.32" fill="#43300b"/><rect x="37.95" y="15.07" width="158.12" height="5.32" fill="#86b230"/><rect x="37.95" y="20.10" width="158.12" height="5.32" fill="#86b230"/><rect x="195.88" y="20.10" width="6.52" height="5.32" fill="#504a12"/><rect x="37.95" y="25.12" width="164.45" height="10.35" fill="#86b230"/><rect x="31.62" y="25.12" width="6.52" height="10.35" fill="#504a12"/><rect x="31.62" y="35.17" width="170.77" height="5.32" fill="#86b230"/><rect x="202.20" y="35.17" width="6.52" height="5.32" fill="#504a12"/><rect x="31.62" y="40.19" width="177.10" height="5.32" fill="#86b230"/><rect x="31.62" y="45.22" width="177.10" height="5.32" fill="#86b230"/><rect x="25.30" y="45.22" width="6.52" height="5.32" fill="#504a12"/><rect x="31.62" y="50.24" width="177.10" height="5.32" fill="#86b230"/><rect x="25.30" y="50.24" width="6.52" height="5.32" fill="#504a12"/><rect x="208.52" y="50.24" width="6.52" height="5.32" fill="#504a12"/><rect x="25.30" y="55.26" width="189.75" height="10.35" fill="#86b230"/><rect x="25.30" y="65.31" width="189.75" height="20.40" fill="#86b230"/><rect x="18.97" y="65.31" width="6.52" height="20.40" fill="#504a12"/><rect x="214.85" y="65.31" width="6.52" height="20.40" fill="#504a12"/><rect x="25.30" y="85.41" width="189.75" height="5.32" fill="#86b230"/><rect x="18.97" y="85.41" width="6.52" height="5.32" fill="#504a12"/><rect x="25.30" y="90.43" width="183.42" height="10.35" fill="#86b230"/><rect x="208.52" y="90.43" width="6.52" height="10.35" fill="#504a12"/><rect x="31.62" y="100.48" width="177.10" height="5.32" fill="#86b230"/><rect x="25.30" y="100.48" width="6.52" height="5.32" fill="#504a12"/><rect x="31.62" y="105.50" width="170.77" height="5.32" fill="#86b230"/><rect x="25.30" y="105.50" width="6.52" height="5.32" fill="#504a12"/><rect x="202.20" y="105.50" width="6.52" height="5.32" fill="#504a12"/><rect x="31.62" y="110.53" width="170.77" height="5.32" fill="#86b230"/><rect x="31.62" y="115.55" width="164.45" height="5.32" fill="#86b230"/><rect x="195.88" y="115.55" width="6.52" height="5.32" fill="#504a12"/><rect x="37.95" y="120.58" width="158.12" height="5.32" fill="#86b230"/><rect x="31.62" y="120.58" width="6.52" height="5.32" fill="#504a12"/><rect x="195.88" y="120.58" width="6.52" height="5.32" fill="#504a12"/><rect x="113.55" y="60.89" width="7.52" height="4.02" fill="#1c0500"/></g></svg>
<svg style="left:357.75px;top:202px;" width="8" height="127.6" viewBox="0 0 8 127.6"><path d="M-3.5 0.00 H0 M-3.5 5.02 H0 M-3.5 10.05 H0 M-3.5 15.07 H0 M-3.5 20.10 H0 M-3.5 25.12 H0 M-3.5 30.14 H0 M-3.5 35.17 H0 M-3.5 40.19 H0 M-3.5 45.22 H0 M-3.5 50.24 H0 M-3.5 55.26 H0 M-3.5 60.29 H0 M-3.5 65.31 H0 M-3.5 70.34 H0 M-3.5 75.36 H0 M-3.5 80.38 H0 M-3.5 85.41 H0 M-3.5 90.43 H0 M-3.5 95.46 H0 M-3.5 100.48 H0 M-3.5 105.50 H0 M-3.5 110.53 H0 M-3.5 115.55 H0 M-3.5 120.58 H0 M-3.5 125.60 H0 M-6.5 0.00 H0 M-6.5 57.42 H0 M-6.5 93.30 H0 M-6.5 125.60 H0" transform="translate(8 1)" stroke="#bababa" stroke-width="1" fill="none"/></svg>
<span class="t" style="left:330.00px;top:193.55px;font-size:16.32px;line-height:20px;transform:scaleX(0.8500);">0.46</span>
<span class="t" style="left:330.00px;top:251.55px;font-size:16.32px;line-height:20px;transform:scaleX(0.8595);">0.3</span>
<span class="t" style="left:330.00px;top:286.55px;font-size:16.32px;line-height:20px;transform:scaleX(0.8595);">0.2</span>
<span class="t" style="left:330.00px;top:318.55px;font-size:16.32px;line-height:20px;transform:scaleX(0.8674);">0.11</span>
<span class="t" style="left:276.81px;top:255.20px;width:89.88px;font-size:14.72px;line-height:16px;transform:rotate(-90deg) scaleX(0.8956);transform-origin:50% 50%">Vref h=0.35 V</span>
<svg style="left:364.75px;top:328.6px;" width="229.7" height="8" viewBox="0 0 229.7 8"><path d="M0.00 0 V3 M6.32 0 V3 M12.65 0 V3 M18.97 0 V3 M25.30 0 V3 M31.62 0 V3 M37.95 0 V3 M44.27 0 V3 M50.60 0 V3 M56.92 0 V3 M63.25 0 V3 M69.57 0 V3 M75.90 0 V3 M82.22 0 V3 M88.55 0 V3 M94.87 0 V3 M101.20 0 V3 M107.52 0 V3 M113.85 0 V3 M120.17 0 V3 M126.50 0 V3 M132.82 0 V3 M139.15 0 V3 M145.47 0 V3 M151.80 0 V3 M158.12 0 V3 M164.45 0 V3 M170.77 0 V3 M177.10 0 V3 M183.42 0 V3 M189.75 0 V3 M196.07 0 V3 M202.40 0 V3 M208.72 0 V3 M215.05 0 V3 M221.37 0 V3 M227.70 0 V3 M0.00 0 V6.5 M32.89 0 V6.5 M73.37 0 V6.5 M113.85 0 V6.5 M154.33 0 V6.5 M194.81 0 V6.5 M227.70 0 V6.5" transform="translate(1 0)" stroke="#a8a8a8" stroke-width="1" fill="none"/></svg>
<span class="t" style="left:345.38px;top:337.35px;font-size:16.32px;line-height:20px;transform:scaleX(0.8806);">-56.25</span>
<span class="t" style="left:428.12px;top:337.35px;font-size:16.32px;line-height:20px;transform:scaleX(0.9326);">-20</span>
<span class="t" style="left:475.60px;top:337.35px;font-size:16.32px;line-height:20px;transform:scaleX(0.8814);">0</span>
<span class="t" style="left:511.83px;top:337.35px;font-size:16.32px;line-height:20px;transform:scaleX(0.9089);">20</span>
<span class="t" style="left:552.31px;top:337.35px;font-size:16.32px;line-height:20px;transform:scaleX(0.9089);">40</span>
<span class="t" style="left:575.70px;top:337.35px;font-size:16.32px;line-height:20px;transform:scaleX(0.8692);">56.25</span>
<span class="t" style="left:418.50px;top:358.80px;font-size:13.87px;line-height:17px;transform:scaleX(0.9333);">Eye width=93.75%UI</span>
<div style="left:365.25px;top:199px;width:85.5px;height:19px;background:#fafafa"></div>
<span class="t" style="left:366.75px;top:198.65px;font-size:16.32px;line-height:20px;transform:scaleX(0.8633);">(0.29V, 70UI)</span>
<div style="left:567.25px;top:199px;width:44px;height:19px;background:#f8f8f8"></div>
<span class="t" style="left:568.75px;top:198.65px;font-size:16.32px;line-height:20px;transform:scaleX(0.9400);">DQ=9</span>
<svg style="left:673.75px;top:203px;" width="227.7" height="125.6" viewBox="0 0 227.7 125.6"><g shape-rendering="crispEdges"><rect width="227.7" height="125.6" fill="#300b00"/><rect x="44.27" y="0.00" width="132.82" height="5.32" fill="#86b230"/><rect x="37.95" y="0.00" width="6.52" height="5.32" fill="#504a12"/><rect x="170.77" y="0.00" width="6.32" height="5.32" fill="#6e8323"/><rect x="177.10" y="0.00" width="6.32" height="5.32" fill="#43300b"/><rect x="164.45" y="0.00" width="6.32" height="5.32" fill="#7c9e2a"/><rect x="44.27" y="5.02" width="139.15" height="5.32" fill="#86b230"/><rect x="37.95" y="5.02" width="6.52" height="5.32" fill="#504a12"/><rect x="177.10" y="5.02" width="6.32" height="5.32" fill="#6e8323"/><rect x="183.42" y="5.02" width="6.32" height="5.32" fill="#43300b"/><rect x="37.95" y="10.05" width="151.80" height="5.32" fill="#86b230"/><rect x="189.55" y="10.05" width="6.52" height="5.32" fill="#504a12"/><rect x="183.42" y="10.05" width="6.32" height="5.32" fill="#6e8323"/><rect x="196.07" y="10.05" width="6.32" height="5.32" fill="#43300b"/><rect x="37.95" y="15.07" width="158.12" height="10.35" fill="#86b230"/><rect x="195.88" y="15.07" width="6.52" height="10.35" fill="#504a12"/><rect x="37.95" y="25.12" width="164.45" height="5.32" fill="#86b230"/><rect x="31.62" y="25.12" width="6.52" height="5.32" fill="#504a12"/><rect x="37.95" y="30.14" width="164.45" height="5.32" fill="#86b230"/><rect x="31.62" y="30.14" width="6.52" height="5.32" fill="#504a12"/><rect x="202.20" y="30.14" width="6.52" height="5.32" fill="#504a12"/><rect x="31.62" y="35.17" width="170.77" height="5.32" fill="#86b230"/><rect x="202.20" y="35.17" width="6.52" height="5.32" fill="#504a12"/><rect x="31.62" y="40.19" width="177.10" height="5.32" fill="#86b230"/><rect x="31.62" y="45.22" width="177.10" height="5.32" fill="#86b230"/><rect x="208.52" y="45.22" width="6.52" height="5.32" fill="#504a12"/><rect x="31.62" y="50.24" width="177.10" height="5.32" fill="#86b230"/><rect x="25.30" y="50.24" width="6.52" height="5.32" fill="#504a12"/><rect x="208.52" y="50.24" width="6.52" height="5.32" fill="#504a12"/><rect x="31.62" y="55.26" width="183.42" height="5.32" fill="#86b230"/><rect x="25.30" y="55.26" width="6.52" height="5.32" fill="#504a12"/><rect x="25.30" y="60.29" width="189.75" height="30.44" fill="#86b230"/><rect x="214.85" y="60.29" width="6.52" height="30.44" fill="#504a12"/><rect x="31.62" y="90.43" width="183.42" height="5.32" fill="#86b230"/><rect x="25.30" y="90.43" width="6.52" height="5.32" fill="#504a12"/><rect x="31.62" y="95.46" width="177.10" height="5.32" fill="#86b230"/><rect x="25.30" y="95.46" width="6.52" height="5.32" fill="#504a12"/><rect x="208.52" y="95.46" width="6.52" height="5.32" fill="#504a12"/><rect x="31.62" y="100.48" width="177.10" height="10.35" fill="#86b230"/><rect x="37.95" y="110.53" width="164.45" height="5.32" fill="#86b230"/><rect x="31.62" y="110.53" width="6.52" height="5.32" fill="#504a12"/><rect x="202.20" y="110.53" width="6.52" height="5.32" fill="#504a12"/><rect x="37.95" y="115.55" width="164.45" height="5.32" fill="#86b230"/><rect x="31.62" y="115.55" width="6.52" height="5.32" fill="#504a12"/><rect x="37.95" y="120.58" width="158.12" height="5.32" fill="#86b230"/><rect x="195.88" y="120.58" width="6.52" height="5.32" fill="#504a12"/><rect x="113.55" y="60.89" width="7.52" height="4.02" fill="#1c0500"/></g></svg>
<svg style="left:665.75px;top:202px;" width="8" height="127.6" viewBox="0 0 8 127.6"><path d="M-3.5 0.00 H0 M-3.5 5.02 H0 M-3.5 10.05 H0 M-3.5 15.07 H0 M-3.5 20.10 H0 M-3.5 25.12 H0 M-3.5 30.14 H0 M-3.5 35.17 H0 M-3.5 40.19 H0 M-3.5 45.22 H0 M-3.5 50.24 H0 M-3.5 55.26 H0 M-3.5 60.29 H0 M-3.5 65.31 H0 M-3.5 70.34 H0 M-3.5 75.36 H0 M-3.5 80.38 H0 M-3.5 85.41 H0 M-3.5 90.43 H0 M-3.5 95.46 H0 M-3.5 100.48 H0 M-3.5 105.50 H0 M-3.5 110.53 H0 M-3.5 115.55 H0 M-3.5 120.58 H0 M-3.5 125.60 H0 M-6.5 0.00 H0 M-6.5 57.42 H0 M-6.5 93.30 H0 M-6.5 125.60 H0" transform="translate(8 1)" stroke="#bababa" stroke-width="1" fill="none"/></svg>
<span class="t" style="left:638.00px;top:193.55px;font-size:16.32px;line-height:20px;transform:scaleX(0.8500);">0.46</span>
<span class="t" style="left:638.00px;top:251.55px;font-size:16.32px;line-height:20px;transform:scaleX(0.8595);">0.3</span>
<span class="t" style="left:638.00px;top:286.55px;font-size:16.32px;line-height:20px;transform:scaleX(0.8595);">0.2</span>
<span class="t" style="left:638.00px;top:318.55px;font-size:16.32px;line-height:20px;transform:scaleX(0.8674);">0.11</span>
<span class="t" style="left:584.81px;top:255.20px;width:89.88px;font-size:14.72px;line-height:16px;transform:rotate(-90deg) scaleX(0.8956);transform-origin:50% 50%">Vref h=0.35 V</span>
<svg style="left:672.75px;top:328.6px;" width="229.7" height="8" viewBox="0 0 229.7 8"><path d="M0.00 0 V3 M6.32 0 V3 M12.65 0 V3 M18.97 0 V3 M25.30 0 V3 M31.62 0 V3 M37.95 0 V3 M44.27 0 V3 M50.60 0 V3 M56.92 0 V3 M63.25 0 V3 M69.57 0 V3 M75.90 0 V3 M82.22 0 V3 M88.55 0 V3 M94.87 0 V3 M101.20 0 V3 M107.52 0 V3 M113.85 0 V3 M120.17 0 V3 M126.50 0 V3 M132.82 0 V3 M139.15 0 V3 M145.47 0 V3 M151.80 0 V3 M158.12 0 V3 M164.45 0 V3 M170.77 0 V3 M177.10 0 V3 M183.42 0 V3 M189.75 0 V3 M196.07 0 V3 M202.40 0 V3 M208.72 0 V3 M215.05 0 V3 M221.37 0 V3 M227.70 0 V3 M0.00 0 V6.5 M32.89 0 V6.5 M73.37 0 V6.5 M113.85 0 V6.5 M154.33 0 V6.5 M194.81 0 V6.5 M227.70 0 V6.5" transform="translate(1 0)" stroke="#a8a8a8" stroke-width="1" fill="none"/></svg>
<span class="t" style="left:653.38px;top:337.35px;font-size:16.32px;line-height:20px;transform:scaleX(0.8806);">-56.25</span>
<span class="t" style="left:736.12px;top:337.35px;font-size:16.32px;line-height:20px;transform:scaleX(0.9326);">-20</span>
<span class="t" style="left:783.60px;top:337.35px;font-size:16.32px;line-height:20px;transform:scaleX(0.8814);">0</span>
<span class="t" style="left:819.83px;top:337.35px;font-size:16.32px;line-height:20px;transform:scaleX(0.9089);">20</span>
<span class="t" style="left:860.31px;top:337.35px;font-size:16.32px;line-height:20px;transform:scaleX(0.9089);">40</span>
<span class="t" style="left:883.70px;top:337.35px;font-size:16.32px;line-height:20px;transform:scaleX(0.8692);">56.25</span>
<span class="t" style="left:726.50px;top:358.80px;font-size:13.87px;line-height:17px;transform:scaleX(0.9333);">Eye width=93.75%UI</span>
<div style="left:673.25px;top:199px;width:85.5px;height:19px;background:#fafafa"></div>
<span class="t" style="left:674.75px;top:198.65px;font-size:16.32px;line-height:20px;transform:scaleX(0.8633);">(0.29V, 69UI)</span>
<div style="left:867.75px;top:199px;width:51.5px;height:19px;background:#f8f8f8"></div>
<span class="t" style="left:869.25px;top:198.65px;font-size:16.32px;line-height:20px;transform:scaleX(0.9202);">DQ=10</span>
<svg style="left:57.75px;top:390.45px;" width="227.7" height="125.6" viewBox="0 0 227.7 125.6"><g shape-rendering="crispEdges"><rect width="227.7" height="125.6" fill="#300b00"/><rect x="44.27" y="0.00" width="120.17" height="5.32" fill="#86b230"/><rect x="158.12" y="0.00" width="6.32" height="5.32" fill="#6e8323"/><rect x="164.45" y="0.00" width="6.32" height="5.32" fill="#43300b"/><rect x="151.80" y="0.00" width="6.32" height="5.32" fill="#7c9e2a"/><rect x="44.27" y="5.02" width="126.50" height="5.32" fill="#86b230"/><rect x="170.57" y="5.02" width="6.52" height="5.32" fill="#504a12"/><rect x="164.45" y="5.02" width="6.32" height="5.32" fill="#6e8323"/><rect x="177.10" y="5.02" width="6.32" height="5.32" fill="#43300b"/><rect x="44.27" y="10.05" width="139.15" height="5.32" fill="#86b230"/><rect x="177.10" y="10.05" width="6.32" height="5.32" fill="#6e8323"/><rect x="183.42" y="10.05" width="6.32" height="5.32" fill="#43300b"/><rect x="44.27" y="15.07" width="151.80" height="5.32" fill="#86b230"/><rect x="37.95" y="15.07" width="6.52" height="5.32" fill="#504a12"/><rect x="44.27" y="20.10" width="151.80" height="5.32" fill="#86b230"/><rect x="37.95" y="20.10" width="6.52" height="5.32" fill="#504a12"/><rect x="195.88" y="20.10" width="6.52" height="5.32" fill="#504a12"/><rect x="37.95" y="25.12" width="158.12" height="5.32" fill="#86b230"/><rect x="195.88" y="25.12" width="6.52" height="5.32" fill="#504a12"/><rect x="37.95" y="30.14" width="164.45" height="5.32" fill="#86b230"/><rect x="37.95" y="35.17" width="164.45" height="10.35" fill="#86b230"/><rect x="31.62" y="35.17" width="6.52" height="10.35" fill="#504a12"/><rect x="202.20" y="35.17" width="6.52" height="10.35" fill="#504a12"/><rect x="31.62" y="45.22" width="177.10" height="5.32" fill="#86b230"/><rect x="31.62" y="50.24" width="177.10" height="5.32" fill="#86b230"/><rect x="208.52" y="50.24" width="6.52" height="5.32" fill="#504a12"/><rect x="31.62" y="55.26" width="183.42" height="5.32" fill="#86b230"/><rect x="31.62" y="60.29" width="183.42" height="5.32" fill="#86b230"/><rect x="25.30" y="60.29" width="6.52" height="5.32" fill="#504a12"/><rect x="31.62" y="65.31" width="183.42" height="5.32" fill="#86b230"/><rect x="25.30" y="65.31" width="6.52" height="5.32" fill="#504a12"/><rect x="214.85" y="65.31" width="6.52" height="5.32" fill="#504a12"/><rect x="25.30" y="70.34" width="189.75" height="15.37" fill="#86b230"/><rect x="214.85" y="70.34" width="6.52" height="15.37" fill="#504a12"/><rect x="31.62" y="85.41" width="183.42" height="5.32" fill="#86b230"/><rect x="25.30" y="85.41" width="6.52" height="5.32" fill="#504a12"/><rect x="214.85" y="85.41" width="6.52" height="5.32" fill="#504a12"/><rect x="31.62" y="90.43" width="183.42" height="5.32" fill="#86b230"/><rect x="25.30" y="90.43" width="6.52" height="5.32" fill="#504a12"/><rect x="31.62" y="95.46" width="177.10" height="10.35" fill="#86b230"/><rect x="208.52" y="95.46" width="6.52" height="10.35" fill="#504a12"/><rect x="37.95" y="105.50" width="170.77" height="5.32" fill="#86b230"/><rect x="31.62" y="105.50" width="6.52" height="5.32" fill="#504a12"/><rect x="37.95" y="110.53" width="164.45" height="5.32" fill="#86b230"/><rect x="31.62" y="110.53" width="6.52" height="5.32" fill="#504a12"/><rect x="202.20" y="110.53" width="6.52" height="5.32" fill="#504a12"/><rect x="37.95" y="115.55" width="164.45" height="5.32" fill="#86b230"/><rect x="37.95" y="120.58" width="158.12" height="5.32" fill="#86b230"/><rect x="195.88" y="120.58" width="6.52" height="5.32" fill="#504a12"/><rect x="113.55" y="60.89" width="7.52" height="4.02" fill="#1c0500"/></g></svg>
<svg style="left:49.75px;top:389.45px;" width="8" height="127.6" viewBox="0 0 8 127.6"><path d="M-3.5 0.00 H0 M-3.5 5.02 H0 M-3.5 10.05 H0 M-3.5 15.07 H0 M-3.5 20.10 H0 M-3.5 25.12 H0 M-3.5 30.14 H0 M-3.5 35.17 H0 M-3.5 40.19 H0 M-3.5 45.22 H0 M-3.5 50.24 H0 M-3.5 55.26 H0 M-3.5 60.29 H0 M-3.5 65.31 H0 M-3.5 70.34 H0 M-3.5 75.36 H0 M-3.5 80.38 H0 M-3.5 85.41 H0 M-3.5 90.43 H0 M-3.5 95.46 H0 M-3.5 100.48 H0 M-3.5 105.50 H0 M-3.5 110.53 H0 M-3.5 115.55 H0 M-3.5 120.58 H0 M-3.5 125.60 H0 M-6.5 0.00 H0 M-6.5 57.42 H0 M-6.5 93.30 H0 M-6.5 125.60 H0" transform="translate(8 1)" stroke="#bababa" stroke-width="1" fill="none"/></svg>
<span class="t" style="left:22.00px;top:381.00px;font-size:16.32px;line-height:20px;transform:scaleX(0.8500);">0.46</span>
<span class="t" style="left:22.00px;top:439.00px;font-size:16.32px;line-height:20px;transform:scaleX(0.8595);">0.3</span>
<span class="t" style="left:22.00px;top:474.00px;font-size:16.32px;line-height:20px;transform:scaleX(0.8595);">0.2</span>
<span class="t" style="left:22.00px;top:506.00px;font-size:16.32px;line-height:20px;transform:scaleX(0.8674);">0.11</span>
<span class="t" style="left:-31.19px;top:442.65px;width:89.88px;font-size:14.72px;line-height:16px;transform:rotate(-90deg) scaleX(0.8956);transform-origin:50% 50%">Vref h=0.35 V</span>
<svg style="left:56.75px;top:516.05px;" width="229.7" height="8" viewBox="0 0 229.7 8"><path d="M0.00 0 V3 M6.32 0 V3 M12.65 0 V3 M18.97 0 V3 M25.30 0 V3 M31.62 0 V3 M37.95 0 V3 M44.27 0 V3 M50.60 0 V3 M56.92 0 V3 M63.25 0 V3 M69.57 0 V3 M75.90 0 V3 M82.22 0 V3 M88.55 0 V3 M94.87 0 V3 M101.20 0 V3 M107.52 0 V3 M113.85 0 V3 M120.17 0 V3 M126.50 0 V3 M132.82 0 V3 M139.15 0 V3 M145.47 0 V3 M151.80 0 V3 M158.12 0 V3 M164.45 0 V3 M170.77 0 V3 M177.10 0 V3 M183.42 0 V3 M189.75 0 V3 M196.07 0 V3 M202.40 0 V3 M208.72 0 V3 M215.05 0 V3 M221.37 0 V3 M227.70 0 V3 M0.00 0 V6.5 M32.89 0 V6.5 M73.37 0 V6.5 M113.85 0 V6.5 M154.33 0 V6.5 M194.81 0 V6.5 M227.70 0 V6.5" transform="translate(1 0)" stroke="#a8a8a8" stroke-width="1" fill="none"/></svg>
<span class="t" style="left:37.38px;top:524.80px;font-size:16.32px;line-height:20px;transform:scaleX(0.8806);">-56.25</span>
<span class="t" style="left:120.12px;top:524.80px;font-size:16.32px;line-height:20px;transform:scaleX(0.9326);">-20</span>
<span class="t" style="left:167.60px;top:524.80px;font-size:16.32px;line-height:20px;transform:scaleX(0.8814);">0</span>
<span class="t" style="left:203.83px;top:524.80px;font-size:16.32px;line-height:20px;transform:scaleX(0.9089);">20</span>
<span class="t" style="left:244.31px;top:524.80px;font-size:16.32px;line-height:20px;transform:scaleX(0.9089);">40</span>
<span class="t" style="left:267.70px;top:524.80px;font-size:16.32px;line-height:20px;transform:scaleX(0.8692);">56.25</span>
<span class="t" style="left:110.50px;top:546.25px;font-size:13.87px;line-height:17px;transform:scaleX(0.9333);">Eye width=93.75%UI</span>
<div style="left:57.25px;top:386.45px;width:85.5px;height:19px;background:#fafafa"></div>
<span class="t" style="left:58.75px;top:386.10px;font-size:16.32px;line-height:20px;transform:scaleX(0.8633);">(0.29V, 65UI)</span>
<div style="left:251.75px;top:386.45px;width:51.5px;height:19px;background:#f8f8f8"></div>
<span class="t" style="left:253.25px;top:386.10px;font-size:16.32px;line-height:20px;transform:scaleX(0.9202);">DQ=16</span>
<svg style="left:365.75px;top:390.45px;" width="227.7" height="125.6" viewBox="0 0 227.7 125.6"><g shape-rendering="crispEdges"><rect width="227.7" height="125.6" fill="#300b00"/><rect x="44.27" y="0.00" width="120.17" height="5.32" fill="#86b230"/><rect x="164.25" y="0.00" width="6.52" height="5.32" fill="#504a12"/><rect x="158.12" y="0.00" width="6.32" height="5.32" fill="#6e8323"/><rect x="170.77" y="0.00" width="6.32" height="5.32" fill="#43300b"/><rect x="151.80" y="0.00" width="6.32" height="5.32" fill="#7c9e2a"/><rect x="44.27" y="5.02" width="132.82" height="5.32" fill="#86b230"/><rect x="37.95" y="5.02" width="6.52" height="5.32" fill="#504a12"/><rect x="170.77" y="5.02" width="6.32" height="5.32" fill="#6e8323"/><rect x="177.10" y="5.02" width="6.32" height="5.32" fill="#43300b"/><rect x="44.27" y="10.05" width="139.15" height="5.32" fill="#86b230"/><rect x="37.95" y="10.05" width="6.52" height="5.32" fill="#504a12"/><rect x="183.22" y="10.05" width="6.52" height="5.32" fill="#504a12"/><rect x="177.10" y="10.05" width="6.32" height="5.32" fill="#6e8323"/><rect x="189.75" y="10.05" width="6.32" height="5.32" fill="#43300b"/><rect x="37.95" y="15.07" width="158.12" height="5.32" fill="#86b230"/><rect x="37.95" y="20.10" width="158.12" height="5.32" fill="#86b230"/><rect x="195.88" y="20.10" width="6.52" height="5.32" fill="#504a12"/><rect x="37.95" y="25.12" width="164.45" height="10.35" fill="#86b230"/><rect x="31.62" y="25.12" width="6.52" height="10.35" fill="#504a12"/><rect x="31.62" y="35.17" width="170.77" height="5.32" fill="#86b230"/><rect x="202.20" y="35.17" width="6.52" height="5.32" fill="#504a12"/><rect x="31.62" y="40.19" width="177.10" height="10.35" fill="#86b230"/><rect x="31.62" y="50.24" width="177.10" height="5.32" fill="#86b230"/><rect x="25.30" y="50.24" width="6.52" height="5.32" fill="#504a12"/><rect x="208.52" y="50.24" width="6.52" height="5.32" fill="#504a12"/><rect x="31.62" y="55.26" width="183.42" height="5.32" fill="#86b230"/><rect x="25.30" y="55.26" width="6.52" height="5.32" fill="#504a12"/><rect x="25.30" y="60.29" width="189.75" height="5.32" fill="#86b230"/><rect x="25.30" y="65.31" width="189.75" height="5.32" fill="#86b230"/><rect x="214.85" y="65.31" width="6.52" height="5.32" fill="#504a12"/><rect x="25.30" y="70.34" width="189.75" height="15.37" fill="#86b230"/><rect x="18.97" y="70.34" width="6.52" height="15.37" fill="#504a12"/><rect x="214.85" y="70.34" width="6.52" height="15.37" fill="#504a12"/><rect x="25.30" y="85.41" width="189.75" height="5.32" fill="#86b230"/><rect x="214.85" y="85.41" width="6.52" height="5.32" fill="#504a12"/><rect x="25.30" y="90.43" width="189.75" height="5.32" fill="#86b230"/><rect x="31.62" y="95.46" width="177.10" height="5.32" fill="#86b230"/><rect x="25.30" y="95.46" width="6.52" height="5.32" fill="#504a12"/><rect x="208.52" y="95.46" width="6.52" height="5.32" fill="#504a12"/><rect x="31.62" y="100.48" width="177.10" height="5.32" fill="#86b230"/><rect x="208.52" y="100.48" width="6.52" height="5.32" fill="#504a12"/><rect x="31.62" y="105.50" width="177.10" height="5.32" fill="#86b230"/><rect x="37.95" y="110.53" width="164.45" height="5.32" fill="#86b230"/><rect x="31.62" y="110.53" width="6.52" height="5.32" fill="#504a12"/><rect x="202.20" y="110.53" width="6.52" height="5.32" fill="#504a12"/><rect x="37.95" y="115.55" width="164.45" height="5.32" fill="#86b230"/><rect x="31.62" y="115.55" width="6.52" height="5.32" fill="#504a12"/><rect x="37.95" y="120.58" width="158.12" height="5.32" fill="#86b230"/><rect x="195.88" y="120.58" width="6.52" height="5.32" fill="#504a12"/><rect x="113.55" y="60.89" width="7.52" height="4.02" fill="#1c0500"/></g></svg>
<svg style="left:357.75px;top:389.45px;" width="8" height="127.6" viewBox="0 0 8 127.6"><path d="M-3.5 0.00 H0 M-3.5 5.02 H0 M-3.5 10.05 H0 M-3.5 15.07 H0 M-3.5 20.10 H0 M-3.5 25.12 H0 M-3.5 30.14 H0 M-3.5 35.17 H0 M-3.5 40.19 H0 M-3.5 45.22 H0 M-3.5 50.24 H0 M-3.5 55.26 H0 M-3.5 60.29 H0 M-3.5 65.31 H0 M-3.5 70.34 H0 M-3.5 75.36 H0 M-3.5 80.38 H0 M-3.5 85.41 H0 M-3.5 90.43 H0 M-3.5 95.46 H0 M-3.5 100.48 H0 M-3.5 105.50 H0 M-3.5 110.53 H0 M-3.5 115.55 H0 M-3.5 120.58 H0 M-3.5 125.60 H0 M-6.5 0.00 H0 M-6.5 57.42 H0 M-6.5 93.30 H0 M-6.5 125.60 H0" transform="translate(8 1)" stroke="#bababa" stroke-width="1" fill="none"/></svg>
<span class="t" style="left:330.00px;top:381.00px;font-size:16.32px;line-height:20px;transform:scaleX(0.8500);">0.46</span>
<span class="t" style="left:330.00px;top:439.00px;font-size:16.32px;line-height:20px;transform:scaleX(0.8595);">0.3</span>
<span class="t" style="left:330.00px;top:474.00px;font-size:16.32px;line-height:20px;transform:scaleX(0.8595);">0.2</span>
<span class="t" style="left:330.00px;top:506.00px;font-size:16.32px;line-height:20px;transform:scaleX(0.8674);">0.11</span>
<span class="t" style="left:276.81px;top:442.65px;width:89.88px;font-size:14.72px;line-height:16px;transform:rotate(-90deg) scaleX(0.8956);transform-origin:50% 50%">Vref h=0.35 V</span>
<svg style="left:364.75px;top:516.05px;" width="229.7" height="8" viewBox="0 0 229.7 8"><path d="M0.00 0 V3 M6.32 0 V3 M12.65 0 V3 M18.97 0 V3 M25.30 0 V3 M31.62 0 V3 M37.95 0 V3 M44.27 0 V3 M50.60 0 V3 M56.92 0 V3 M63.25 0 V3 M69.57 0 V3 M75.90 0 V3 M82.22 0 V3 M88.55 0 V3 M94.87 0 V3 M101.20 0 V3 M107.52 0 V3 M113.85 0 V3 M120.17 0 V3 M126.50 0 V3 M132.82 0 V3 M139.15 0 V3 M145.47 0 V3 M151.80 0 V3 M158.12 0 V3 M164.45 0 V3 M170.77 0 V3 M177.10 0 V3 M183.42 0 V3 M189.75 0 V3 M196.07 0 V3 M202.40 0 V3 M208.72 0 V3 M215.05 0 V3 M221.37 0 V3 M227.70 0 V3 M0.00 0 V6.5 M32.89 0 V6.5 M73.37 0 V6.5 M113.85 0 V6.5 M154.33 0 V6.5 M194.81 0 V6.5 M227.70 0 V6.5" transform="translate(1 0)" stroke="#a8a8a8" stroke-width="1" fill="none"/></svg>
<span class="t" style="left:345.38px;top:524.80px;font-size:16.32px;line-height:20px;transform:scaleX(0.8806);">-56.25</span>
<span class="t" style="left:428.12px;top:524.80px;font-size:16.32px;line-height:20px;transform:scaleX(0.9326);">-20</span>
<span class="t" style="left:475.60px;top:524.80px;font-size:16.32px;line-height:20px;transform:scaleX(0.8814);">0</span>
<span class="t" style="left:511.83px;top:524.80px;font-size:16.32px;line-height:20px;transform:scaleX(0.9089);">20</span>
<span class="t" style="left:552.31px;top:524.80px;font-size:16.32px;line-height:20px;transform:scaleX(0.9089);">40</span>
<span class="t" style="left:575.70px;top:524.80px;font-size:16.32px;line-height:20px;transform:scaleX(0.8692);">56.25</span>
<span class="t" style="left:418.50px;top:546.25px;font-size:13.87px;line-height:17px;transform:scaleX(0.9333);">Eye width=93.75%UI</span>
<div style="left:365.25px;top:386.45px;width:85.5px;height:19px;background:#fafafa"></div>
<span class="t" style="left:366.75px;top:386.10px;font-size:16.32px;line-height:20px;transform:scaleX(0.8633);">(0.29V, 66UI)</span>
<div style="left:559.75px;top:386.45px;width:51.5px;height:19px;background:#f8f8f8"></div>
<span class="t" style="left:561.25px;top:386.10px;font-size:16.32px;line-height:20px;transform:scaleX(0.9202);">DQ=17</span>
<svg style="left:673.75px;top:390.45px;" width="227.7" height="125.6" viewBox="0 0 227.7 125.6"><g shape-rendering="crispEdges"><rect width="227.7" height="125.6" fill="#300b00"/><rect x="44.27" y="0.00" width="126.50" height="5.32" fill="#86b230"/><rect x="164.45" y="0.00" width="6.32" height="5.32" fill="#6e8323"/><rect x="170.77" y="0.00" width="6.32" height="5.32" fill="#43300b"/><rect x="158.12" y="0.00" width="6.32" height="5.32" fill="#7c9e2a"/><rect x="44.27" y="5.02" width="132.82" height="5.32" fill="#86b230"/><rect x="37.95" y="5.02" width="6.52" height="5.32" fill="#504a12"/><rect x="170.77" y="5.02" width="6.32" height="5.32" fill="#6e8323"/><rect x="177.10" y="5.02" width="6.32" height="5.32" fill="#43300b"/><rect x="44.27" y="10.05" width="139.15" height="5.32" fill="#86b230"/><rect x="37.95" y="10.05" width="6.52" height="5.32" fill="#504a12"/><rect x="183.22" y="10.05" width="6.52" height="5.32" fill="#504a12"/><rect x="177.10" y="10.05" width="6.32" height="5.32" fill="#6e8323"/><rect x="189.75" y="10.05" width="6.32" height="5.32" fill="#43300b"/><rect x="37.95" y="15.07" width="158.12" height="5.32" fill="#86b230"/><rect x="37.95" y="20.10" width="158.12" height="5.32" fill="#86b230"/><rect x="195.88" y="20.10" width="6.52" height="5.32" fill="#504a12"/><rect x="37.95" y="25.12" width="164.45" height="5.32" fill="#86b230"/><rect x="37.95" y="30.14" width="164.45" height="5.32" fill="#86b230"/><rect x="31.62" y="30.14" width="6.52" height="5.32" fill="#504a12"/><rect x="37.95" y="35.17" width="164.45" height="5.32" fill="#86b230"/><rect x="31.62" y="35.17" width="6.52" height="5.32" fill="#504a12"/><rect x="202.20" y="35.17" width="6.52" height="5.32" fill="#504a12"/><rect x="31.62" y="40.19" width="177.10" height="10.35" fill="#86b230"/><rect x="31.62" y="50.24" width="177.10" height="5.32" fill="#86b230"/><rect x="208.52" y="50.24" width="6.52" height="5.32" fill="#504a12"/><rect x="31.62" y="55.26" width="183.42" height="10.35" fill="#86b230"/><rect x="25.30" y="55.26" width="6.52" height="10.35" fill="#504a12"/><rect x="25.30" y="65.31" width="189.75" height="20.40" fill="#86b230"/><rect x="214.85" y="65.31" width="6.52" height="20.40" fill="#504a12"/><rect x="31.62" y="85.41" width="183.42" height="5.32" fill="#86b230"/><rect x="25.30" y="85.41" width="6.52" height="5.32" fill="#504a12"/><rect x="214.85" y="85.41" width="6.52" height="5.32" fill="#504a12"/><rect x="31.62" y="90.43" width="183.42" height="5.32" fill="#86b230"/><rect x="25.30" y="90.43" width="6.52" height="5.32" fill="#504a12"/><rect x="31.62" y="95.46" width="177.10" height="10.35" fill="#86b230"/><rect x="208.52" y="95.46" width="6.52" height="10.35" fill="#504a12"/><rect x="37.95" y="105.50" width="170.77" height="5.32" fill="#86b230"/><rect x="31.62" y="105.50" width="6.52" height="5.32" fill="#504a12"/><rect x="37.95" y="110.53" width="164.45" height="5.32" fill="#86b230"/><rect x="31.62" y="110.53" width="6.52" height="5.32" fill="#504a12"/><rect x="202.20" y="110.53" width="6.52" height="5.32" fill="#504a12"/><rect x="37.95" y="115.55" width="164.45" height="5.32" fill="#86b230"/><rect x="37.95" y="120.58" width="158.12" height="5.32" fill="#86b230"/><rect x="195.88" y="120.58" width="6.52" height="5.32" fill="#504a12"/><rect x="113.55" y="60.89" width="7.52" height="4.02" fill="#1c0500"/></g></svg>
<svg style="left:665.75px;top:389.45px;" width="8" height="127.6" viewBox="0 0 8 127.6"><path d="M-3.5 0.00 H0 M-3.5 5.02 H0 M-3.5 10.05 H0 M-3.5 15.07 H0 M-3.5 20.10 H0 M-3.5 25.12 H0 M-3.5 30.14 H0 M-3.5 35.17 H0 M-3.5 40.19 H0 M-3.5 45.22 H0 M-3.5 50.24 H0 M-3.5 55.26 H0 M-3.5 60.29 H0 M-3.5 65.31 H0 M-3.5 70.34 H0 M-3.5 75.36 H0 M-3.5 80.38 H0 M-3.5 85.41 H0 M-3.5 90.43 H0 M-3.5 95.46 H0 M-3.5 100.48 H0 M-3.5 105.50 H0 M-3.5 110.53 H0 M-3.5 115.55 H0 M-3.5 120.58 H0 M-3.5 125.60 H0 M-6.5 0.00 H0 M-6.5 57.42 H0 M-6.5 93.30 H0 M-6.5 125.60 H0" transform="translate(8 1)" stroke="#bababa" stroke-width="1" fill="none"/></svg>
<span class="t" style="left:638.00px;top:381.00px;font-size:16.32px;line-height:20px;transform:scaleX(0.8500);">0.46</span>
<span class="t" style="left:638.00px;top:439.00px;font-size:16.32px;line-height:20px;transform:scaleX(0.8595);">0.3</span>
<span class="t" style="left:638.00px;top:474.00px;font-size:16.32px;line-height:20px;transform:scaleX(0.8595);">0.2</span>
<span class="t" style="left:638.00px;top:506.00px;font-size:16.32px;line-height:20px;transform:scaleX(0.8674);">0.11</span>
<span class="t" style="left:584.81px;top:442.65px;width:89.88px;font-size:14.72px;line-height:16px;transform:rotate(-90deg) scaleX(0.8956);transform-origin:50% 50%">Vref h=0.35 V</span>
<svg style="left:672.75px;top:516.05px;" width="229.7" height="8" viewBox="0 0 229.7 8"><path d="M0.00 0 V3 M6.32 0 V3 M12.65 0 V3 M18.97 0 V3 M25.30 0 V3 M31.62 0 V3 M37.95 0 V3 M44.27 0 V3 M50.60 0 V3 M56.92 0 V3 M63.25 0 V3 M69.57 0 V3 M75.90 0 V3 M82.22 0 V3 M88.55 0 V3 M94.87 0 V3 M101.20 0 V3 M107.52 0 V3 M113.85 0 V3 M120.17 0 V3 M126.50 0 V3 M132.82 0 V3 M139.15 0 V3 M145.47 0 V3 M151.80 0 V3 M158.12 0 V3 M164.45 0 V3 M170.77 0 V3 M177.10 0 V3 M183.42 0 V3 M189.75 0 V3 M196.07 0 V3 M202.40 0 V3 M208.72 0 V3 M215.05 0 V3 M221.37 0 V3 M227.70 0 V3 M0.00 0 V6.5 M32.89 0 V6.5 M73.37 0 V6.5 M113.85 0 V6.5 M154.33 0 V6.5 M194.81 0 V6.5 M227.70 0 V6.5" transform="translate(1 0)" stroke="#a8a8a8" stroke-width="1" fill="none"/></svg>
<span class="t" style="left:653.38px;top:524.80px;font-size:16.32px;line-height:20px;transform:scaleX(0.8806);">-56.25</span>
<span class="t" style="left:736.12px;top:524.80px;font-size:16.32px;line-height:20px;transform:scaleX(0.9326);">-20</span>
<span class="t" style="left:783.60px;top:524.80px;font-size:16.32px;line-height:20px;transform:scaleX(0.8814);">0</span>
<span class="t" style="left:819.83px;top:524.80px;font-size:16.32px;line-height:20px;transform:scaleX(0.9089);">20</span>
<span class="t" style="left:860.31px;top:524.80px;font-size:16.32px;line-height:20px;transform:scaleX(0.9089);">40</span>
<span class="t" style="left:883.70px;top:524.80px;font-size:16.32px;line-height:20px;transform:scaleX(0.8692);">56.25</span>
<span class="t" style="left:726.50px;top:546.25px;font-size:13.87px;line-height:17px;transform:scaleX(0.9333);">Eye width=93.75%UI</span>
<div style="left:673.25px;top:386.45px;width:85.5px;height:19px;background:#fafafa"></div>
<span class="t" style="left:674.75px;top:386.10px;font-size:16.32px;line-height:20px;transform:scaleX(0.8633);">(0.29V, 66UI)</span>
<div style="left:867.75px;top:386.45px;width:51.5px;height:19px;background:#f8f8f8"></div>
<span class="t" style="left:869.25px;top:386.10px;font-size:16.32px;line-height:20px;transform:scaleX(0.9202);">DQ=18</span>
<svg style="left:57.75px;top:577.9px;" width="227.7" height="125.6" viewBox="0 0 227.7 125.6"><g shape-rendering="crispEdges"><rect width="227.7" height="125.6" fill="#300b00"/><rect x="44.27" y="0.00" width="126.50" height="5.32" fill="#86b230"/><rect x="164.45" y="0.00" width="6.32" height="5.32" fill="#6e8323"/><rect x="170.77" y="0.00" width="6.32" height="5.32" fill="#43300b"/><rect x="158.12" y="0.00" width="6.32" height="5.32" fill="#7c9e2a"/><rect x="44.27" y="5.02" width="132.82" height="5.32" fill="#86b230"/><rect x="37.95" y="5.02" width="6.52" height="5.32" fill="#504a12"/><rect x="176.90" y="5.02" width="6.52" height="5.32" fill="#504a12"/><rect x="170.77" y="5.02" width="6.32" height="5.32" fill="#6e8323"/><rect x="183.42" y="5.02" width="6.32" height="5.32" fill="#43300b"/><rect x="44.27" y="10.05" width="145.47" height="5.32" fill="#86b230"/><rect x="37.95" y="10.05" width="6.52" height="5.32" fill="#504a12"/><rect x="183.42" y="10.05" width="6.32" height="5.32" fill="#6e8323"/><rect x="189.75" y="10.05" width="6.32" height="5.32" fill="#43300b"/><rect x="44.27" y="15.07" width="151.80" height="5.32" fill="#86b230"/><rect x="37.95" y="15.07" width="6.52" height="5.32" fill="#504a12"/><rect x="37.95" y="20.10" width="158.12" height="5.32" fill="#86b230"/><rect x="195.88" y="20.10" width="6.52" height="5.32" fill="#504a12"/><rect x="37.95" y="25.12" width="164.45" height="5.32" fill="#86b230"/><rect x="37.95" y="30.14" width="164.45" height="5.32" fill="#86b230"/><rect x="31.62" y="30.14" width="6.52" height="5.32" fill="#504a12"/><rect x="37.95" y="35.17" width="164.45" height="5.32" fill="#86b230"/><rect x="31.62" y="35.17" width="6.52" height="5.32" fill="#504a12"/><rect x="202.20" y="35.17" width="6.52" height="5.32" fill="#504a12"/><rect x="37.95" y="40.19" width="170.77" height="5.32" fill="#86b230"/><rect x="31.62" y="40.19" width="6.52" height="5.32" fill="#504a12"/><rect x="31.62" y="45.22" width="177.10" height="5.32" fill="#86b230"/><rect x="31.62" y="50.24" width="177.10" height="5.32" fill="#86b230"/><rect x="208.52" y="50.24" width="6.52" height="5.32" fill="#504a12"/><rect x="31.62" y="55.26" width="183.42" height="10.35" fill="#86b230"/><rect x="25.30" y="55.26" width="6.52" height="10.35" fill="#504a12"/><rect x="25.30" y="65.31" width="189.75" height="20.40" fill="#86b230"/><rect x="214.85" y="65.31" width="6.52" height="20.40" fill="#504a12"/><rect x="25.30" y="85.41" width="189.75" height="5.32" fill="#86b230"/><rect x="31.62" y="90.43" width="177.10" height="5.32" fill="#86b230"/><rect x="25.30" y="90.43" width="6.52" height="5.32" fill="#504a12"/><rect x="208.52" y="90.43" width="6.52" height="5.32" fill="#504a12"/><rect x="31.62" y="95.46" width="177.10" height="5.32" fill="#86b230"/><rect x="208.52" y="95.46" width="6.52" height="5.32" fill="#504a12"/><rect x="31.62" y="100.48" width="177.10" height="5.32" fill="#86b230"/><rect x="31.62" y="105.50" width="170.77" height="5.32" fill="#86b230"/><rect x="202.20" y="105.50" width="6.52" height="5.32" fill="#504a12"/><rect x="37.95" y="110.53" width="164.45" height="5.32" fill="#86b230"/><rect x="31.62" y="110.53" width="6.52" height="5.32" fill="#504a12"/><rect x="37.95" y="115.55" width="164.45" height="5.32" fill="#86b230"/><rect x="37.95" y="120.58" width="158.12" height="5.32" fill="#86b230"/><rect x="195.88" y="120.58" width="6.52" height="5.32" fill="#504a12"/><rect x="113.55" y="60.89" width="7.52" height="4.02" fill="#1c0500"/></g></svg>
<svg style="left:49.75px;top:576.9px;" width="8" height="127.6" viewBox="0 0 8 127.6"><path d="M-3.5 0.00 H0 M-3.5 5.02 H0 M-3.5 10.05 H0 M-3.5 15.07 H0 M-3.5 20.10 H0 M-3.5 25.12 H0 M-3.5 30.14 H0 M-3.5 35.17 H0 M-3.5 40.19 H0 M-3.5 45.22 H0 M-3.5 50.24 H0 M-3.5 55.26 H0 M-3.5 60.29 H0 M-3.5 65.31 H0 M-3.5 70.34 H0 M-3.5 75.36 H0 M-3.5 80.38 H0 M-3.5 85.41 H0 M-3.5 90.43 H0 M-3.5 95.46 H0 M-3.5 100.48 H0 M-3.5 105.50 H0 M-3.5 110.53 H0 M-3.5 115.55 H0 M-3.5 120.58 H0 M-3.5 125.60 H0 M-6.5 0.00 H0 M-6.5 57.42 H0 M-6.5 93.30 H0 M-6.5 125.60 H0" transform="translate(8 1)" stroke="#bababa" stroke-width="1" fill="none"/></svg>
<span class="t" style="left:22.00px;top:568.45px;font-size:16.32px;line-height:20px;transform:scaleX(0.8500);">0.46</span>
<span class="t" style="left:22.00px;top:626.45px;font-size:16.32px;line-height:20px;transform:scaleX(0.8595);">0.3</span>
<span class="t" style="left:22.00px;top:661.45px;font-size:16.32px;line-height:20px;transform:scaleX(0.8595);">0.2</span>
<span class="t" style="left:22.00px;top:693.45px;font-size:16.32px;line-height:20px;transform:scaleX(0.8674);">0.11</span>
<span class="t" style="left:-31.19px;top:630.10px;width:89.88px;font-size:14.72px;line-height:16px;transform:rotate(-90deg) scaleX(0.8956);transform-origin:50% 50%">Vref h=0.35 V</span>
<svg style="left:56.75px;top:703.5px;" width="229.7" height="8" viewBox="0 0 229.7 8"><path d="M0.00 0 V3 M6.32 0 V3 M12.65 0 V3 M18.97 0 V3 M25.30 0 V3 M31.62 0 V3 M37.95 0 V3 M44.27 0 V3 M50.60 0 V3 M56.92 0 V3 M63.25 0 V3 M69.57 0 V3 M75.90 0 V3 M82.22 0 V3 M88.55 0 V3 M94.87 0 V3 M101.20 0 V3 M107.52 0 V3 M113.85 0 V3 M120.17 0 V3 M126.50 0 V3 M132.82 0 V3 M139.15 0 V3 M145.47 0 V3 M151.80 0 V3 M158.12 0 V3 M164.45 0 V3 M170.77 0 V3 M177.10 0 V3 M183.42 0 V3 M189.75 0 V3 M196.07 0 V3 M202.40 0 V3 M208.72 0 V3 M215.05 0 V3 M221.37 0 V3 M227.70 0 V3 M0.00 0 V6.5 M32.89 0 V6.5 M73.37 0 V6.5 M113.85 0 V6.5 M154.33 0 V6.5 M194.81 0 V6.5 M227.70 0 V6.5" transform="translate(1 0)" stroke="#a8a8a8" stroke-width="1" fill="none"/></svg>
<span class="t" style="left:37.38px;top:712.25px;font-size:16.32px;line-height:20px;transform:scaleX(0.8806);">-56.25</span>
<span class="t" style="left:120.12px;top:712.25px;font-size:16.32px;line-height:20px;transform:scaleX(0.9326);">-20</span>
<span class="t" style="left:167.60px;top:712.25px;font-size:16.32px;line-height:20px;transform:scaleX(0.8814);">0</span>
<span class="t" style="left:203.83px;top:712.25px;font-size:16.32px;line-height:20px;transform:scaleX(0.9089);">20</span>
<span class="t" style="left:244.31px;top:712.25px;font-size:16.32px;line-height:20px;transform:scaleX(0.9089);">40</span>
<span class="t" style="left:267.70px;top:712.25px;font-size:16.32px;line-height:20px;transform:scaleX(0.8692);">56.25</span>
<span class="t" style="left:110.50px;top:733.70px;font-size:13.87px;line-height:17px;transform:scaleX(0.9333);">Eye width=93.75%UI</span>
<div style="left:57.25px;top:573.9px;width:85.5px;height:19px;background:#fafafa"></div>
<span class="t" style="left:58.75px;top:573.55px;font-size:16.32px;line-height:20px;transform:scaleX(0.8633);">(0.29V, 70UI)</span>
<div style="left:251.75px;top:573.9px;width:51.5px;height:19px;background:#f8f8f8"></div>
<span class="t" style="left:253.25px;top:573.55px;font-size:16.32px;line-height:20px;transform:scaleX(0.9202);">DQ=24</span>
<svg style="left:365.75px;top:577.9px;" width="227.7" height="125.6" viewBox="0 0 227.7 125.6"><g shape-rendering="crispEdges"><rect width="227.7" height="125.6" fill="#300b00"/><rect x="44.27" y="0.00" width="126.50" height="5.32" fill="#86b230"/><rect x="164.45" y="0.00" width="6.32" height="5.32" fill="#6e8323"/><rect x="170.77" y="0.00" width="6.32" height="5.32" fill="#43300b"/><rect x="158.12" y="0.00" width="6.32" height="5.32" fill="#7c9e2a"/><rect x="44.27" y="5.02" width="132.82" height="5.32" fill="#86b230"/><rect x="37.95" y="5.02" width="6.52" height="5.32" fill="#504a12"/><rect x="176.90" y="5.02" width="6.52" height="5.32" fill="#504a12"/><rect x="170.77" y="5.02" width="6.32" height="5.32" fill="#6e8323"/><rect x="183.42" y="5.02" width="6.32" height="5.32" fill="#43300b"/><rect x="44.27" y="10.05" width="145.47" height="5.32" fill="#86b230"/><rect x="37.95" y="10.05" width="6.52" height="5.32" fill="#504a12"/><rect x="183.42" y="10.05" width="6.32" height="5.32" fill="#6e8323"/><rect x="189.75" y="10.05" width="6.32" height="5.32" fill="#43300b"/><rect x="44.27" y="15.07" width="151.80" height="5.32" fill="#86b230"/><rect x="37.95" y="15.07" width="6.52" height="5.32" fill="#504a12"/><rect x="37.95" y="20.10" width="158.12" height="5.32" fill="#86b230"/><rect x="195.88" y="20.10" width="6.52" height="5.32" fill="#504a12"/><rect x="37.95" y="25.12" width="164.45" height="5.32" fill="#86b230"/><rect x="37.95" y="30.14" width="164.45" height="5.32" fill="#86b230"/><rect x="31.62" y="30.14" width="6.52" height="5.32" fill="#504a12"/><rect x="37.95" y="35.17" width="164.45" height="5.32" fill="#86b230"/><rect x="31.62" y="35.17" width="6.52" height="5.32" fill="#504a12"/><rect x="202.20" y="35.17" width="6.52" height="5.32" fill="#504a12"/><rect x="37.95" y="40.19" width="170.77" height="5.32" fill="#86b230"/><rect x="31.62" y="40.19" width="6.52" height="5.32" fill="#504a12"/><rect x="31.62" y="45.22" width="177.10" height="5.32" fill="#86b230"/><rect x="31.62" y="50.24" width="177.10" height="5.32" fill="#86b230"/><rect x="208.52" y="50.24" width="6.52" height="5.32" fill="#504a12"/><rect x="31.62" y="55.26" width="183.42" height="10.35" fill="#86b230"/><rect x="25.30" y="55.26" width="6.52" height="10.35" fill="#504a12"/><rect x="25.30" y="65.31" width="189.75" height="20.40" fill="#86b230"/><rect x="214.85" y="65.31" width="6.52" height="20.40" fill="#504a12"/><rect x="25.30" y="85.41" width="189.75" height="5.32" fill="#86b230"/><rect x="31.62" y="90.43" width="177.10" height="5.32" fill="#86b230"/><rect x="25.30" y="90.43" width="6.52" height="5.32" fill="#504a12"/><rect x="208.52" y="90.43" width="6.52" height="5.32" fill="#504a12"/><rect x="31.62" y="95.46" width="177.10" height="5.32" fill="#86b230"/><rect x="208.52" y="95.46" width="6.52" height="5.32" fill="#504a12"/><rect x="31.62" y="100.48" width="177.10" height="5.32" fill="#86b230"/><rect x="31.62" y="105.50" width="170.77" height="5.32" fill="#86b230"/><rect x="202.20" y="105.50" width="6.52" height="5.32" fill="#504a12"/><rect x="37.95" y="110.53" width="164.45" height="5.32" fill="#86b230"/><rect x="31.62" y="110.53" width="6.52" height="5.32" fill="#504a12"/><rect x="37.95" y="115.55" width="164.45" height="5.32" fill="#86b230"/><rect x="37.95" y="120.58" width="158.12" height="5.32" fill="#86b230"/><rect x="195.88" y="120.58" width="6.52" height="5.32" fill="#504a12"/><rect x="113.55" y="60.89" width="7.52" height="4.02" fill="#1c0500"/></g></svg>
<svg style="left:357.75px;top:576.9px;" width="8" height="127.6" viewBox="0 0 8 127.6"><path d="M-3.5 0.00 H0 M-3.5 5.02 H0 M-3.5 10.05 H0 M-3.5 15.07 H0 M-3.5 20.10 H0 M-3.5 25.12 H0 M-3.5 30.14 H0 M-3.5 35.17 H0 M-3.5 40.19 H0 M-3.5 45.22 H0 M-3.5 50.24 H0 M-3.5 55.26 H0 M-3.5 60.29 H0 M-3.5 65.31 H0 M-3.5 70.34 H0 M-3.5 75.36 H0 M-3.5 80.38 H0 M-3.5 85.41 H0 M-3.5 90.43 H0 M-3.5 95.46 H0 M-3.5 100.48 H0 M-3.5 105.50 H0 M-3.5 110.53 H0 M-3.5 115.55 H0 M-3.5 120.58 H0 M-3.5 125.60 H0 M-6.5 0.00 H0 M-6.5 57.42 H0 M-6.5 93.30 H0 M-6.5 125.60 H0" transform="translate(8 1)" stroke="#bababa" stroke-width="1" fill="none"/></svg>
<span class="t" style="left:330.00px;top:568.45px;font-size:16.32px;line-height:20px;transform:scaleX(0.8500);">0.46</span>
<span class="t" style="left:330.00px;top:626.45px;font-size:16.32px;line-height:20px;transform:scaleX(0.8595);">0.3</span>
<span class="t" style="left:330.00px;top:661.45px;font-size:16.32px;line-height:20px;transform:scaleX(0.8595);">0.2</span>
<span class="t" style="left:330.00px;top:693.45px;font-size:16.32px;line-height:20px;transform:scaleX(0.8674);">0.11</span>
<span class="t" style="left:276.81px;top:630.10px;width:89.88px;font-size:14.72px;line-height:16px;transform:rotate(-90deg) scaleX(0.8956);transform-origin:50% 50%">Vref h=0.35 V</span>
<svg style="left:364.75px;top:703.5px;" width="229.7" height="8" viewBox="0 0 229.7 8"><path d="M0.00 0 V3 M6.32 0 V3 M12.65 0 V3 M18.97 0 V3 M25.30 0 V3 M31.62 0 V3 M37.95 0 V3 M44.27 0 V3 M50.60 0 V3 M56.92 0 V3 M63.25 0 V3 M69.57 0 V3 M75.90 0 V3 M82.22 0 V3 M88.55 0 V3 M94.87 0 V3 M101.20 0 V3 M107.52 0 V3 M113.85 0 V3 M120.17 0 V3 M126.50 0 V3 M132.82 0 V3 M139.15 0 V3 M145.47 0 V3 M151.80 0 V3 M158.12 0 V3 M164.45 0 V3 M170.77 0 V3 M177.10 0 V3 M183.42 0 V3 M189.75 0 V3 M196.07 0 V3 M202.40 0 V3 M208.72 0 V3 M215.05 0 V3 M221.37 0 V3 M227.70 0 V3 M0.00 0 V6.5 M32.89 0 V6.5 M73.37 0 V6.5 M113.85 0 V6.5 M154.33 0 V6.5 M194.81 0 V6.5 M227.70 0 V6.5" transform="translate(1 0)" stroke="#a8a8a8" stroke-width="1" fill="none"/></svg>
<span class="t" style="left:345.38px;top:712.25px;font-size:16.32px;line-height:20px;transform:scaleX(0.8806);">-56.25</span>
<span class="t" style="left:428.12px;top:712.25px;font-size:16.32px;line-height:20px;transform:scaleX(0.9326);">-20</span>
<span class="t" style="left:475.60px;top:712.25px;font-size:16.32px;line-height:20px;transform:scaleX(0.8814);">0</span>
<span class="t" style="left:511.83px;top:712.25px;font-size:16.32px;line-height:20px;transform:scaleX(0.9089);">20</span>
<span class="t" style="left:552.31px;top:712.25px;font-size:16.32px;line-height:20px;transform:scaleX(0.9089);">40</span>
<span class="t" style="left:575.70px;top:712.25px;font-size:16.32px;line-height:20px;transform:scaleX(0.8692);">56.25</span>
<span class="t" style="left:418.50px;top:733.70px;font-size:13.87px;line-height:17px;transform:scaleX(0.9333);">Eye width=93.75%UI</span>
<div style="left:365.25px;top:573.9px;width:85.5px;height:19px;background:#fafafa"></div>
<span class="t" style="left:366.75px;top:573.55px;font-size:16.32px;line-height:20px;transform:scaleX(0.8633);">(0.29V, 70UI)</span>
<div style="left:559.75px;top:573.9px;width:51.5px;height:19px;background:#f8f8f8"></div>
<span class="t" style="left:561.25px;top:573.55px;font-size:16.32px;line-height:20px;transform:scaleX(0.9202);">DQ=25</span>
<svg style="left:673.75px;top:577.9px;" width="227.7" height="125.6" viewBox="0 0 227.7 125.6"><g shape-rendering="crispEdges"><rect width="227.7" height="125.6" fill="#300b00"/><rect x="44.27" y="0.00" width="126.50" height="5.32" fill="#86b230"/><rect x="164.45" y="0.00" width="6.32" height="5.32" fill="#6e8323"/><rect x="170.77" y="0.00" width="6.32" height="5.32" fill="#43300b"/><rect x="158.12" y="0.00" width="6.32" height="5.32" fill="#7c9e2a"/><rect x="44.27" y="5.02" width="132.82" height="5.32" fill="#86b230"/><rect x="37.95" y="5.02" width="6.52" height="5.32" fill="#504a12"/><rect x="176.90" y="5.02" width="6.52" height="5.32" fill="#504a12"/><rect x="170.77" y="5.02" width="6.32" height="5.32" fill="#6e8323"/><rect x="183.42" y="5.02" width="6.32" height="5.32" fill="#43300b"/><rect x="44.27" y="10.05" width="145.47" height="5.32" fill="#86b230"/><rect x="37.95" y="10.05" width="6.52" height="5.32" fill="#504a12"/><rect x="183.42" y="10.05" width="6.32" height="5.32" fill="#6e8323"/><rect x="189.75" y="10.05" width="6.32" height="5.32" fill="#43300b"/><rect x="44.27" y="15.07" width="151.80" height="5.32" fill="#86b230"/><rect x="37.95" y="15.07" width="6.52" height="5.32" fill="#504a12"/><rect x="37.95" y="20.10" width="158.12" height="5.32" fill="#86b230"/><rect x="195.88" y="20.10" width="6.52" height="5.32" fill="#504a12"/><rect x="37.95" y="25.12" width="164.45" height="5.32" fill="#86b230"/><rect x="37.95" y="30.14" width="164.45" height="5.32" fill="#86b230"/><rect x="31.62" y="30.14" width="6.52" height="5.32" fill="#504a12"/><rect x="37.95" y="35.17" width="164.45" height="5.32" fill="#86b230"/><rect x="31.62" y="35.17" width="6.52" height="5.32" fill="#504a12"/><rect x="202.20" y="35.17" width="6.52" height="5.32" fill="#504a12"/><rect x="37.95" y="40.19" width="170.77" height="5.32" fill="#86b230"/><rect x="31.62" y="40.19" width="6.52" height="5.32" fill="#504a12"/><rect x="31.62" y="45.22" width="177.10" height="5.32" fill="#86b230"/><rect x="31.62" y="50.24" width="177.10" height="5.32" fill="#86b230"/><rect x="208.52" y="50.24" width="6.52" height="5.32" fill="#504a12"/><rect x="31.62" y="55.26" width="183.42" height="10.35" fill="#86b230"/><rect x="25.30" y="55.26" width="6.52" height="10.35" fill="#504a12"/><rect x="25.30" y="65.31" width="189.75" height="20.40" fill="#86b230"/><rect x="214.85" y="65.31" width="6.52" height="20.40" fill="#504a12"/><rect x="25.30" y="85.41" width="189.75" height="5.32" fill="#86b230"/><rect x="31.62" y="90.43" width="177.10" height="5.32" fill="#86b230"/><rect x="25.30" y="90.43" width="6.52" height="5.32" fill="#504a12"/><rect x="208.52" y="90.43" width="6.52" height="5.32" fill="#504a12"/><rect x="31.62" y="95.46" width="177.10" height="5.32" fill="#86b230"/><rect x="208.52" y="95.46" width="6.52" height="5.32" fill="#504a12"/><rect x="31.62" y="100.48" width="177.10" height="5.32" fill="#86b230"/><rect x="31.62" y="105.50" width="170.77" height="5.32" fill="#86b230"/><rect x="202.20" y="105.50" width="6.52" height="5.32" fill="#504a12"/><rect x="37.95" y="110.53" width="164.45" height="5.32" fill="#86b230"/><rect x="31.62" y="110.53" width="6.52" height="5.32" fill="#504a12"/><rect x="37.95" y="115.55" width="164.45" height="5.32" fill="#86b230"/><rect x="37.95" y="120.58" width="158.12" height="5.32" fill="#86b230"/><rect x="195.88" y="120.58" width="6.52" height="5.32" fill="#504a12"/><rect x="113.55" y="60.89" width="7.52" height="4.02" fill="#1c0500"/></g></svg>
<svg style="left:665.75px;top:576.9px;" width="8" height="127.6" viewBox="0 0 8 127.6"><path d="M-3.5 0.00 H0 M-3.5 5.02 H0 M-3.5 10.05 H0 M-3.5 15.07 H0 M-3.5 20.10 H0 M-3.5 25.12 H0 M-3.5 30.14 H0 M-3.5 35.17 H0 M-3.5 40.19 H0 M-3.5 45.22 H0 M-3.5 50.24 H0 M-3.5 55.26 H0 M-3.5 60.29 H0 M-3.5 65.31 H0 M-3.5 70.34 H0 M-3.5 75.36 H0 M-3.5 80.38 H0 M-3.5 85.41 H0 M-3.5 90.43 H0 M-3.5 95.46 H0 M-3.5 100.48 H0 M-3.5 105.50 H0 M-3.5 110.53 H0 M-3.5 115.55 H0 M-3.5 120.58 H0 M-3.5 125.60 H0 M-6.5 0.00 H0 M-6.5 57.42 H0 M-6.5 93.30 H0 M-6.5 125.60 H0" transform="translate(8 1)" stroke="#bababa" stroke-width="1" fill="none"/></svg>
<span class="t" style="left:638.00px;top:568.45px;font-size:16.32px;line-height:20px;transform:scaleX(0.8500);">0.46</span>
<span class="t" style="left:638.00px;top:626.45px;font-size:16.32px;line-height:20px;transform:scaleX(0.8595);">0.3</span>
<span class="t" style="left:638.00px;top:661.45px;font-size:16.32px;line-height:20px;transform:scaleX(0.8595);">0.2</span>
<span class="t" style="left:638.00px;top:693.45px;font-size:16.32px;line-height:20px;transform:scaleX(0.8674);">0.11</span>
<span class="t" style="left:584.81px;top:630.10px;width:89.88px;font-size:14.72px;line-height:16px;transform:rotate(-90deg) scaleX(0.8956);transform-origin:50% 50%">Vref h=0.35 V</span>
<svg style="left:672.75px;top:703.5px;" width="229.7" height="8" viewBox="0 0 229.7 8"><path d="M0.00 0 V3 M6.32 0 V3 M12.65 0 V3 M18.97 0 V3 M25.30 0 V3 M31.62 0 V3 M37.95 0 V3 M44.27 0 V3 M50.60 0 V3 M56.92 0 V3 M63.25 0 V3 M69.57 0 V3 M75.90 0 V3 M82.22 0 V3 M88.55 0 V3 M94.87 0 V3 M101.20 0 V3 M107.52 0 V3 M113.85 0 V3 M120.17 0 V3 M126.50 0 V3 M132.82 0 V3 M139.15 0 V3 M145.47 0 V3 M151.80 0 V3 M158.12 0 V3 M164.45 0 V3 M170.77 0 V3 M177.10 0 V3 M183.42 0 V3 M189.75 0 V3 M196.07 0 V3 M202.40 0 V3 M208.72 0 V3 M215.05 0 V3 M221.37 0 V3 M227.70 0 V3 M0.00 0 V6.5 M32.89 0 V6.5 M73.37 0 V6.5 M113.85 0 V6.5 M154.33 0 V6.5 M194.81 0 V6.5 M227.70 0 V6.5" transform="translate(1 0)" stroke="#a8a8a8" stroke-width="1" fill="none"/></svg>
<span class="t" style="left:653.38px;top:712.25px;font-size:16.32px;line-height:20px;transform:scaleX(0.8806);">-56.25</span>
<span class="t" style="left:736.12px;top:712.25px;font-size:16.32px;line-height:20px;transform:scaleX(0.9326);">-20</span>
<span class="t" style="left:783.60px;top:712.25px;font-size:16.32px;line-height:20px;transform:scaleX(0.8814);">0</span>
<span class="t" style="left:819.83px;top:712.25px;font-size:16.32px;line-height:20px;transform:scaleX(0.9089);">20</span>
<span class="t" style="left:860.31px;top:712.25px;font-size:16.32px;line-height:20px;transform:scaleX(0.9089);">40</span>
<span class="t" style="left:883.70px;top:712.25px;font-size:16.32px;line-height:20px;transform:scaleX(0.8692);">56.25</span>
<span class="t" style="left:726.50px;top:733.70px;font-size:13.87px;line-height:17px;transform:scaleX(0.9333);">Eye width=93.75%UI</span>
<div style="left:673.25px;top:573.9px;width:85.5px;height:19px;background:#fafafa"></div>
<span class="t" style="left:674.75px;top:573.55px;font-size:16.32px;line-height:20px;transform:scaleX(0.8633);">(0.29V, 70UI)</span>
<div style="left:867.75px;top:573.9px;width:51.5px;height:19px;background:#f8f8f8"></div>
<span class="t" style="left:869.25px;top:573.55px;font-size:16.32px;line-height:20px;transform:scaleX(0.9202);">DQ=26</span>
<svg style="left:973.75px;top:14.55px;" width="8" height="127.6" viewBox="0 0 8 127.6"><path d="M-3.5 0.00 H0 M-3.5 5.02 H0 M-3.5 10.05 H0 M-3.5 15.07 H0 M-3.5 20.10 H0 M-3.5 25.12 H0 M-3.5 30.14 H0 M-3.5 35.17 H0 M-3.5 40.19 H0 M-3.5 45.22 H0 M-3.5 50.24 H0 M-3.5 55.26 H0 M-3.5 60.29 H0 M-3.5 65.31 H0 M-3.5 70.34 H0 M-3.5 75.36 H0 M-3.5 80.38 H0 M-3.5 85.41 H0 M-3.5 90.43 H0 M-3.5 95.46 H0 M-3.5 100.48 H0 M-3.5 105.50 H0 M-3.5 110.53 H0 M-3.5 115.55 H0 M-3.5 120.58 H0 M-3.5 125.60 H0 M-6.5 0.00 H0 M-6.5 57.42 H0 M-6.5 93.30 H0 M-6.5 125.60 H0" transform="translate(8 1)" stroke="#bababa" stroke-width="1" fill="none"/></svg>
<span class="t" style="left:946.00px;top:6.10px;font-size:16.32px;line-height:20px;transform:scaleX(0.8500);">0.46</span>
<span class="t" style="left:946.00px;top:64.10px;font-size:16.32px;line-height:20px;transform:scaleX(0.8595);">0.3</span>
<span class="t" style="left:946.00px;top:99.10px;font-size:16.32px;line-height:20px;transform:scaleX(0.8595);">0.2</span>
<span class="t" style="left:946.00px;top:131.10px;font-size:16.32px;line-height:20px;transform:scaleX(0.8674);">0.11</span>
<span class="t" style="left:892.81px;top:67.75px;width:89.88px;font-size:14.72px;line-height:16px;transform:rotate(-90deg) scaleX(0.8956);transform-origin:50% 50%">Vref h=0.35 V</span>
<svg style="left:973.75px;top:202px;" width="8" height="127.6" viewBox="0 0 8 127.6"><path d="M-3.5 0.00 H0 M-3.5 5.02 H0 M-3.5 10.05 H0 M-3.5 15.07 H0 M-3.5 20.10 H0 M-3.5 25.12 H0 M-3.5 30.14 H0 M-3.5 35.17 H0 M-3.5 40.19 H0 M-3.5 45.22 H0 M-3.5 50.24 H0 M-3.5 55.26 H0 M-3.5 60.29 H0 M-3.5 65.31 H0 M-3.5 70.34 H0 M-3.5 75.36 H0 M-3.5 80.38 H0 M-3.5 85.41 H0 M-3.5 90.43 H0 M-3.5 95.46 H0 M-3.5 100.48 H0 M-3.5 105.50 H0 M-3.5 110.53 H0 M-3.5 115.55 H0 M-3.5 120.58 H0 M-3.5 125.60 H0 M-6.5 0.00 H0 M-6.5 57.42 H0 M-6.5 93.30 H0 M-6.5 125.60 H0" transform="translate(8 1)" stroke="#bababa" stroke-width="1" fill="none"/></svg>
<span class="t" style="left:946.00px;top:193.55px;font-size:16.32px;line-height:20px;transform:scaleX(0.8500);">0.46</span>
<span class="t" style="left:946.00px;top:251.55px;font-size:16.32px;line-height:20px;transform:scaleX(0.8595);">0.3</span>
<span class="t" style="left:946.00px;top:286.55px;font-size:16.32px;line-height:20px;transform:scaleX(0.8595);">0.2</span>
<span class="t" style="left:946.00px;top:318.55px;font-size:16.32px;line-height:20px;transform:scaleX(0.8674);">0.11</span>
<span class="t" style="left:892.81px;top:255.20px;width:89.88px;font-size:14.72px;line-height:16px;transform:rotate(-90deg) scaleX(0.8956);transform-origin:50% 50%">Vref h=0.35 V</span>
<svg style="left:973.75px;top:389.45px;" width="8" height="127.6" viewBox="0 0 8 127.6"><path d="M-3.5 0.00 H0 M-3.5 5.02 H0 M-3.5 10.05 H0 M-3.5 15.07 H0 M-3.5 20.10 H0 M-3.5 25.12 H0 M-3.5 30.14 H0 M-3.5 35.17 H0 M-3.5 40.19 H0 M-3.5 45.22 H0 M-3.5 50.24 H0 M-3.5 55.26 H0 M-3.5 60.29 H0 M-3.5 65.31 H0 M-3.5 70.34 H0 M-3.5 75.36 H0 M-3.5 80.38 H0 M-3.5 85.41 H0 M-3.5 90.43 H0 M-3.5 95.46 H0 M-3.5 100.48 H0 M-3.5 105.50 H0 M-3.5 110.53 H0 M-3.5 115.55 H0 M-3.5 120.58 H0 M-3.5 125.60 H0 M-6.5 0.00 H0 M-6.5 57.42 H0 M-6.5 93.30 H0 M-6.5 125.60 H0" transform="translate(8 1)" stroke="#bababa" stroke-width="1" fill="none"/></svg>
<span class="t" style="left:946.00px;top:381.00px;font-size:16.32px;line-height:20px;transform:scaleX(0.8500);">0.46</span>
<span class="t" style="left:946.00px;top:439.00px;font-size:16.32px;line-height:20px;transform:scaleX(0.8595);">0.3</span>
<span class="t" style="left:946.00px;top:474.00px;font-size:16.32px;line-height:20px;transform:scaleX(0.8595);">0.2</span>
<span class="t" style="left:946.00px;top:506.00px;font-size:16.32px;line-height:20px;transform:scaleX(0.8674);">0.11</span>
<span class="t" style="left:892.81px;top:442.65px;width:89.88px;font-size:14.72px;line-height:16px;transform:rotate(-90deg) scaleX(0.8956);transform-origin:50% 50%">Vref h=0.35 V</span>
<svg style="left:973.75px;top:576.9px;" width="8" height="127.6" viewBox="0 0 8 127.6"><path d="M-3.5 0.00 H0 M-3.5 5.02 H0 M-3.5 10.05 H0 M-3.5 15.07 H0 M-3.5 20.10 H0 M-3.5 25.12 H0 M-3.5 30.14 H0 M-3.5 35.17 H0 M-3.5 40.19 H0 M-3.5 45.22 H0 M-3.5 50.24 H0 M-3.5 55.26 H0 M-3.5 60.29 H0 M-3.5 65.31 H0 M-3.5 70.34 H0 M-3.5 75.36 H0 M-3.5 80.38 H0 M-3.5 85.41 H0 M-3.5 90.43 H0 M-3.5 95.46 H0 M-3.5 100.48 H0 M-3.5 105.50 H0 M-3.5 110.53 H0 M-3.5 115.55 H0 M-3.5 120.58 H0 M-3.5 125.60 H0 M-6.5 0.00 H0 M-6.5 57.42 H0 M-6.5 93.30 H0 M-6.5 125.60 H0" transform="translate(8 1)" stroke="#bababa" stroke-width="1" fill="none"/></svg>
<span class="t" style="left:946.00px;top:568.45px;font-size:16.32px;line-height:20px;transform:scaleX(0.8500);">0.46</span>
<span class="t" style="left:946.00px;top:626.45px;font-size:16.32px;line-height:20px;transform:scaleX(0.8595);">0.3</span>
<span class="t" style="left:946.00px;top:661.45px;font-size:16.32px;line-height:20px;transform:scaleX(0.8595);">0.2</span>
<span class="t" style="left:946.00px;top:693.45px;font-size:16.32px;line-height:20px;transform:scaleX(0.8674);">0.11</span>
<span class="t" style="left:892.81px;top:630.10px;width:89.88px;font-size:14.72px;line-height:16px;transform:rotate(-90deg) scaleX(0.8956);transform-origin:50% 50%">Vref h=0.35 V</span>
</div>
</div>
</body></html>
